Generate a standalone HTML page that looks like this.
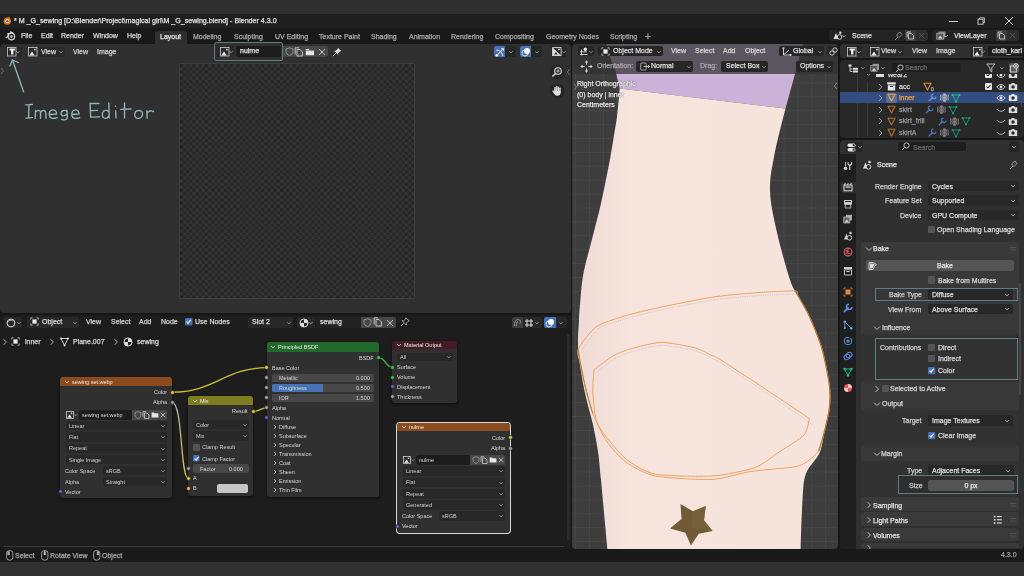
<!DOCTYPE html>
<html><head><meta charset="utf-8">
<style>
*{margin:0;padding:0;box-sizing:border-box}
html,body{width:1024px;height:576px;overflow:hidden;background:#2b2b2b;font-family:"Liberation Sans",sans-serif;color:#d8d8d8;position:relative}
.a{position:absolute}
.t{position:absolute;white-space:nowrap;font-size:7px;line-height:10px;height:10px;-webkit-text-stroke:0.25px currentColor;will-change:transform}
svg.a{overflow:visible}
</style></head><body>
<div class="a" style="left:0px;top:0px;width:1024px;height:14px;background:#303030;border-radius:0px;"></div>
<div class="a" style="left:0px;top:14px;width:1024px;height:14px;background:#1f1f1f;border-radius:0px;"></div>
<div class="a" style="left:0px;top:28px;width:1024px;height:16px;background:#191919;border-radius:0px;"></div>
<div class="a" style="left:0px;top:44px;width:1024px;height:518px;background:#161616;border-radius:0px;"></div>
<div class="a" style="left:0px;top:562px;width:1024px;height:14px;background:#313131;border-radius:0px;"></div>
<svg class="a" style="left:1px;top:16px;" width="11" height="10" viewBox="0 0 11 10"><circle cx="6.3" cy="5.2" r="3.6" fill="#ea7600"/><path d="M0.5 6.5 L4 4.5 L3 3 L6 2.2 L9 0.5 L8.5 3 Z" fill="#ea7600"/><circle cx="6.4" cy="5.2" r="1.9" fill="#fff"/><circle cx="6.4" cy="5.3" r="1.2" fill="#2a5fa8"/></svg>
<div class="t" style="left:14px;top:16.3px;font-size:7.1px;color:#e0e0e0;">* M _G_sewing [D:\Blender\Project\magical girl\M _G_sewing.blend] - Blender 4.3.0</div>
<div class="a" style="left:949px;top:21px;width:9px;height:0.9px;background:#cfcfcf;border-radius:0px;"></div>
<svg class="a" style="left:976px;top:16px;" width="10" height="10" viewBox="0 0 10 10"><rect x="2" y="3.2" width="5" height="5" fill="none" stroke="#cfcfcf" stroke-width="0.9"/><path d="M3.5 3.2 V1.8 H8.4 V6.7 H7" fill="none" stroke="#cfcfcf" stroke-width="0.9"/></svg>
<svg class="a" style="left:1004px;top:16px;" width="10" height="10" viewBox="0 0 10 10"><path d="M1 1 L9 9 M9 1 L1 9" stroke="#dcdcdc" stroke-width="1"/></svg>
<svg class="a" style="left:5px;top:31px;" width="11" height="10" viewBox="0 0 11 10"><circle cx="6.3" cy="5.5" r="3.3" fill="none" stroke="#ddd" stroke-width="1.2"/><circle cx="6.4" cy="5.5" r="1.2" fill="#ddd"/><path d="M0.8 7 L4 4.5 M2 3 L6 2.3 M5 0.8 L8 1.9" stroke="#ddd" stroke-width="1.2"/></svg>
<div class="t" style="left:20.5px;top:30.5px;font-size:7.0px;color:#d8d8d8;">File</div>
<div class="t" style="left:40.6px;top:30.5px;font-size:7.0px;color:#d8d8d8;">Edit</div>
<div class="t" style="left:61px;top:30.5px;font-size:7.0px;color:#d8d8d8;">Render</div>
<div class="t" style="left:92.6px;top:30.5px;font-size:7.0px;color:#d8d8d8;">Window</div>
<div class="t" style="left:126.5px;top:30.5px;font-size:7.0px;color:#d8d8d8;">Help</div>
<div class="a" style="left:155px;top:31px;width:32px;height:13px;background:#2f2f2f;border-radius:3px;border-bottom-left-radius:0;border-bottom-right-radius:0"></div>
<div class="t" style="left:159.8px;top:32.2px;font-size:7.0px;color:#e6e6e6;">Layout</div>
<div class="t" style="left:192.7px;top:32.2px;font-size:7.0px;color:#a8a8a8;">Modeling</div>
<div class="t" style="left:233.7px;top:32.2px;font-size:7.0px;color:#a8a8a8;">Sculpting</div>
<div class="t" style="left:274.5px;top:32.2px;font-size:7.0px;color:#a8a8a8;">UV Editing</div>
<div class="t" style="left:318.5px;top:32.2px;font-size:7.0px;color:#a8a8a8;">Texture Paint</div>
<div class="t" style="left:371px;top:32.2px;font-size:7.0px;color:#a8a8a8;">Shading</div>
<div class="t" style="left:408.8px;top:32.2px;font-size:7.0px;color:#a8a8a8;">Animation</div>
<div class="t" style="left:450.8px;top:32.2px;font-size:7.0px;color:#a8a8a8;">Rendering</div>
<div class="t" style="left:495px;top:32.2px;font-size:7.0px;color:#a8a8a8;">Compositing</div>
<div class="t" style="left:545.5px;top:32.2px;font-size:7.0px;color:#a8a8a8;">Geometry Nodes</div>
<div class="t" style="left:609.5px;top:32.2px;font-size:7.0px;color:#a8a8a8;">Scripting</div>
<div class="t" style="left:645px;top:32.0px;font-size:10px;color:#a0a0a0;">+</div>
<div class="a" style="left:829px;top:30px;width:99px;height:11px;background:#242424;border-radius:3px;"></div>
<svg class="a" style="left:832px;top:31px;" width="14" height="9" viewBox="0 0 14 9"><path d="M1.5 8 L4 2 L6.5 8 Z" fill="#ddd"/><circle cx="7.5" cy="6" r="2.3" fill="none" stroke="#ddd" stroke-width="0.9"/><circle cx="8.3" cy="1.8" r="1.2" fill="#ddd"/></svg>
<svg class="a" style="left:841px;top:32.8px;" width="6" height="6" viewBox="0 0 6 6"><path d="M1.2 2.1 L3 3.9 L4.8 2.1" fill="none" stroke="#bbb" stroke-width="0.9"/></svg>
<div class="t" style="left:851.8px;top:30.5px;font-size:7.0px;color:#dedede;">Scene</div>
<svg class="a" style="left:893px;top:30.5px;" width="10" height="10" viewBox="0 0 10 10"><path d="M2 9 L5 6 M3.5 4 L7 1 L9 3.5 L6 6.5 Z" fill="none" stroke="#999" stroke-width="0.9"/></svg>
<div class="a" style="left:905px;top:30px;width:11px;height:11px;background:#3c3c3c;border-radius:0px;"></div>
<svg class="a" style="left:906px;top:31px;" width="9" height="9" viewBox="0 0 9 9"><path d="M2.5 2.5 H5.5 L7.5 4.5 V8 H2.5 Z M1 6.5 V1 H5" fill="none" stroke="#ccc" stroke-width="0.9"/></svg>
<div class="a" style="left:916px;top:30px;width:12px;height:11px;background:#2e2e2e;border-radius:0px;border-radius:0 3px 3px 0"></div>
<svg class="a" style="left:918px;top:32px;" width="7" height="7" viewBox="0 0 7 7"><path d="M1 1 L6 6 M6 1 L1 6" stroke="#555" stroke-width="0.9"/></svg>
<div class="a" style="left:932px;top:30px;width:87px;height:11px;background:#242424;border-radius:3px;"></div>
<svg class="a" style="left:936px;top:31px;" width="11" height="9" viewBox="0 0 11 9"><rect x="2.5" y="0.5" width="7" height="6" fill="#888"/><rect x="0.8" y="2.2" width="7" height="6" fill="#555" stroke="#bbb" stroke-width="0.7"/><path d="M2 7.5 L4.2 4.5 L6.5 7.5 Z" fill="#ddd"/></svg>
<svg class="a" style="left:943px;top:32.8px;" width="6" height="6" viewBox="0 0 6 6"><path d="M1.2 2.1 L3 3.9 L4.8 2.1" fill="none" stroke="#bbb" stroke-width="0.9"/></svg>
<div class="t" style="left:954px;top:30.5px;font-size:7.0px;color:#dedede;">ViewLayer</div>
<div class="a" style="left:996px;top:30px;width:11px;height:11px;background:#3c3c3c;border-radius:0px;"></div>
<svg class="a" style="left:997px;top:31px;" width="9" height="9" viewBox="0 0 9 9"><path d="M2.5 2.5 H5.5 L7.5 4.5 V8 H2.5 Z M1 6.5 V1 H5" fill="none" stroke="#ccc" stroke-width="0.9"/></svg>
<div class="a" style="left:1007px;top:30px;width:12px;height:11px;background:#2e2e2e;border-radius:0px;border-radius:0 3px 3px 0"></div>
<svg class="a" style="left:1009px;top:32px;" width="7" height="7" viewBox="0 0 7 7"><path d="M1 1 L6 6 M6 1 L1 6" stroke="#555" stroke-width="0.9"/></svg>
<div class="a" style="left:0px;top:44px;width:571px;height:269px;background:#303030;border-radius:4px;"></div>
<div class="a" style="left:5.6px;top:46.5px;width:16px;height:10px;background:#262626;border-radius:2px;"></div>
<svg class="a" style="left:7.0px;top:46.9px;" width="9.5" height="9.5" viewBox="0 0 9.5 9.5"><rect x="0.5" y="0.5" width="8.5" height="8.5" fill="none" stroke="#bdbdbd" stroke-width="0.9"/><path d="M2.5 1.6 H8 V3.6 H6.4 V7.6 H4 V3.6 H2.5 Z" fill="#f0f0f0"/></svg>
<svg class="a" style="left:15.400000000000002px;top:48.9px;" width="6" height="6" viewBox="0 0 6 6"><path d="M1.5 2.25 L3 3.75 L4.5 2.25" fill="none" stroke="#bbb" stroke-width="0.8"/></svg>
<div class="a" style="left:28px;top:46.5px;width:37px;height:10px;background:#2a2a2a;border-radius:2px;"></div>
<svg class="a" style="left:28px;top:46.8px;" width="9.5" height="9.5" viewBox="0 0 9.5 9.5"><rect x="0.5" y="0.5" width="8.5" height="8.5" fill="none" stroke="#bdbdbd" stroke-width="0.9"/><path d="M1.3 8.6 L4 4.6 L6.6 8.6 Z" fill="#f0f0f0"/><circle cx="6.9" cy="2.6" r="0.9" fill="#eee"/></svg>
<div class="t" style="left:41px;top:46.5px;font-size:7.0px;color:#d8d8d8;">View</div>
<svg class="a" style="left:57.5px;top:48.8px;" width="6" height="6" viewBox="0 0 6 6"><path d="M1.5 2.25 L3 3.75 L4.5 2.25" fill="none" stroke="#bbb" stroke-width="0.8"/></svg>
<div class="t" style="left:72.8px;top:46.5px;font-size:7.0px;color:#d2d2d2;">View</div>
<div class="t" style="left:96.9px;top:46.5px;font-size:7.0px;color:#d2d2d2;">Image</div>
<div class="a" style="left:213.5px;top:42px;width:69px;height:19px;background:#303030;border-radius:2px;border:1px solid #5d7c82"></div>
<div class="a" style="left:216px;top:46px;width:18px;height:10.5px;background:#2a2a2a;border-radius:2px;"></div>
<svg class="a" style="left:219.5px;top:47px;" width="9.5" height="9.5" viewBox="0 0 9.5 9.5"><rect x="0.5" y="0.5" width="8.5" height="8.5" fill="none" stroke="#bdbdbd" stroke-width="0.9"/><path d="M1.3 8.6 L4 4.6 L6.6 8.6 Z" fill="#f0f0f0"/><circle cx="6.9" cy="2.6" r="0.9" fill="#eee"/></svg>
<svg class="a" style="left:227.5px;top:48.8px;" width="6" height="6" viewBox="0 0 6 6"><path d="M1.5 2.25 L3 3.75 L4.5 2.25" fill="none" stroke="#bbb" stroke-width="0.8"/></svg>
<div class="a" style="left:235.5px;top:46px;width:45px;height:10.5px;background:#1d1d1d;border-radius:2px;"></div>
<div class="t" style="left:239.8px;top:46.3px;font-size:7.0px;color:#e0e0e0;">nulme</div>
<div class="a" style="left:282.5px;top:46px;width:45px;height:10.5px;background:#474747;border-radius:2px;border-radius:0 2px 2px 0"></div>
<svg class="a" style="left:284.5px;top:47px;" width="9" height="9" viewBox="0 0 9 9"><path d="M4.5 0.8 L8 2 V4.5 C8 6.5 6.5 7.8 4.5 8.5 C2.5 7.8 1 6.5 1 4.5 V2 Z" fill="none" stroke="#999" stroke-width="0.9"/></svg>
<svg class="a" style="left:294px;top:46.8px;" width="10" height="10" viewBox="0 0 10 10"><path d="M3 2.5 H6 L8.5 5 V9 H3 Z M1.2 7.5 V0.8 H5" fill="none" stroke="#cfcfcf" stroke-width="0.9"/></svg>
<svg class="a" style="left:305px;top:47.2px;" width="10" height="9" viewBox="0 0 10 9"><path d="M0.8 2 H3.8 L4.6 3 H9 V8.2 H0.8 Z" fill="#e8e8e8"/><path d="M0.8 3.6 H9" stroke="#474747" stroke-width="0.6"/></svg>
<svg class="a" style="left:318px;top:48.3px;" width="8" height="8" viewBox="0 0 8 8"><path d="M1 1 L7 7 M7 1 L1 7" stroke="#cfcfcf" stroke-width="0.9"/></svg>
<svg class="a" style="left:332px;top:46.5px;" width="10" height="10" viewBox="0 0 10 10"><path d="M6 0.8 L9.2 4 L7.8 4.6 L6.2 6.3 L6.3 8 L2 3.7 L3.7 3.8 L5.4 2.2 Z" fill="#ddd"/><path d="M3.6 6.4 L0.8 9.2" stroke="#ddd" stroke-width="1"/></svg>
<div class="a" style="left:494px;top:46px;width:11px;height:11px;background:#4772b3;border-radius:2px;border-radius:2px 0 0 2px"></div>
<svg class="a" style="left:494.5px;top:46.5px;" width="10" height="10" viewBox="0 0 10 10"><path d="M1.3 3.2 C4.5 3 7.5 5.5 7.8 9.2" fill="none" stroke="#fff" stroke-width="0.9"/><path d="M1.8 8.3 L8.2 1.9" stroke="#fff" stroke-width="0.9"/><circle cx="1.9" cy="8.2" r="1.3" fill="#fff"/><path d="M5.8 1.3 L8.7 1.3 L8.7 4.2 Z" fill="#fff"/></svg>
<div class="a" style="left:505px;top:46px;width:11px;height:11px;background:#262626;border-radius:2px;border-radius:0 2px 2px 0"></div>
<svg class="a" style="left:507.5px;top:48.8px;" width="6" height="6" viewBox="0 0 6 6"><path d="M1.4 2.2 L3 3.8 L4.6 2.2" fill="none" stroke="#bbb" stroke-width="0.8"/></svg>
<div class="a" style="left:520px;top:46px;width:11px;height:11px;background:#4772b3;border-radius:2px;border-radius:2px 0 0 2px"></div>
<svg class="a" style="left:520.5px;top:46.5px;" width="10" height="10" viewBox="0 0 10 10"><circle cx="4" cy="6" r="3" fill="none" stroke="#dfe8f5" stroke-width="0.9"/><circle cx="6" cy="4" r="3" fill="#fff"/></svg>
<div class="a" style="left:531px;top:46px;width:11px;height:11px;background:#262626;border-radius:2px;border-radius:0 2px 2px 0"></div>
<svg class="a" style="left:533.5px;top:48.8px;" width="6" height="6" viewBox="0 0 6 6"><path d="M1.4 2.2 L3 3.8 L4.6 2.2" fill="none" stroke="#bbb" stroke-width="0.8"/></svg>
<div class="a" style="left:551px;top:46px;width:15px;height:11px;background:#262626;border-radius:2px;"></div>
<svg class="a" style="left:551.5px;top:47px;" width="10" height="9" viewBox="0 0 10 9"><rect x="0.6" y="0.6" width="8.5" height="8" fill="none" stroke="#ddd" stroke-width="0.9"/><path d="M0.6 0.6 L9 8.6 H0.6 Z" fill="#ddd"/><path d="M2 7.5 L4 5 L5.5 7.5Z" fill="#333"/><circle cx="7" cy="2.4" r="0.8" fill="#ddd"/></svg>
<svg class="a" style="left:560.5px;top:48.8px;" width="6" height="6" viewBox="0 0 6 6"><path d="M1.5 2.25 L3 3.75 L4.5 2.25" fill="none" stroke="#bbb" stroke-width="0.8"/></svg>
<svg class="a" style="left:549px;top:64px;" width="16" height="16" viewBox="0 0 16 16"><circle cx="8" cy="8" r="7.4" fill="#262626"/><circle cx="9" cy="7" r="3.3" fill="none" stroke="#e0e0e0" stroke-width="1.1"/><path d="M9 5.3 V8.7 M7.3 7 H10.7" stroke="#e0e0e0" stroke-width="0.8"/><path d="M6.6 9.4 L3.4 12.6" stroke="#e0e0e0" stroke-width="1.4"/></svg>
<svg class="a" style="left:549px;top:82.5px;" width="16" height="16" viewBox="0 0 16 16"><circle cx="8" cy="8" r="7.4" fill="#262626"/><g fill="#e0e0e0"><rect x="5.2" y="4" width="1.5" height="5" rx="0.75"/><rect x="6.9" y="3" width="1.5" height="6" rx="0.75"/><rect x="8.6" y="3.4" width="1.5" height="5.6" rx="0.75"/><rect x="10.3" y="4.6" width="1.4" height="4.6" rx="0.7"/><path d="M5.2 8 H11.7 V9.5 C11.7 11.5 10.3 12.8 8.5 12.8 C7 12.8 6.2 12.2 5.3 11 L3.3 8.3 C3 7.7 3.8 7.2 4.3 7.6 L5.2 8.5 Z"/></g></svg>
<svg class="a" style="left:566px;top:67.5px;" width="5" height="8" viewBox="0 0 5 8"><path d="M3.8 1 L1.3 4 L3.8 7" fill="none" stroke="#777" stroke-width="0.9"/></svg>
<svg class="a" style="left:0px;top:67px;" width="5" height="8" viewBox="0 0 5 8"><path d="M1 1 L3.5 4 L1 7" fill="none" stroke="#777" stroke-width="0.9"/></svg>
<div class="a" style="left:178.5px;top:63px;width:236px;height:236px;background:#3d3d3d;border-radius:1.5px;"></div>
<svg class="a" style="left:179.5px;top:64px;" width="234" height="234" viewBox="0 0 234 234"><defs><pattern id="chk" patternUnits="userSpaceOnUse" x="0" y="0" width="6.25" height="6.25"><rect width="6.25" height="6.25" fill="#333333"/><rect width="3.125" height="3.125" fill="#262626"/><rect x="3.125" y="3.125" width="3.125" height="3.125" fill="#262626"/></pattern></defs><rect width="234" height="234" fill="url(#chk)"/></svg>
<svg class="a" style="left:0px;top:55px;" width="170" height="75" viewBox="0 0 170 75"><g fill="none" stroke="#92b4bb" stroke-width="1.35" stroke-linecap="round" stroke-linejoin="round">
<path d="M23.6 36.9 L12.5 5"/><path d="M10 10.8 L12.5 5 L18.3 7.5"/>
<path d="M25.7 49.8 L32.4 49.5 M29 49.7 L28.6 62.8 M26 63.2 L32.4 62.6"/>
<path d="M35.5 55.5 L35.2 63.5 M35.4 57.5 C37 54.8 39.8 54.8 40.5 57 L40.5 63.3 M40.6 57.3 C42.2 54.8 45.4 55 45.8 57.5 L46 63.3"/>
<path d="M49.5 59.5 L56.5 59 C56.8 56 54.5 54.7 52.7 54.9 C50.2 55.3 49 57.8 49.4 60.6 C49.8 63.2 52.5 64.3 57.2 62.6"/>
<path d="M67 56.5 C65.5 54.8 61.3 55 61 58.2 C60.8 61 63.7 61.8 66.8 59.3 M67 55.2 L67.4 61.5 C67.6 64.8 64.5 65.5 61.5 64.4"/>
<path d="M72 59.5 L79 59 C79.3 56 77 54.7 75.2 54.9 C72.7 55.3 71.5 57.8 71.9 60.6 C72.3 63.2 75 64.3 79.7 62.6"/>
<path d="M90.2 48.5 L90.6 62.2 M90.3 48.5 L99 48.5 M90.5 55.6 L97.5 55.3 M90.6 62.2 L99.6 61.8"/>
<path d="M108.8 48 L109.2 63 M108.8 57 C107.5 54.6 103.2 54.8 102.4 58.3 C101.7 61.5 103.5 63.6 106 63.3 C107.5 63 108.5 62 109 60.5"/>
<path d="M115.5 51.2 L115.6 51.4 M115.7 55.8 L116 62.8"/>
<path d="M124.5 48 L124.5 63 M120.8 54.4 L131 54"/>
<path d="M138.5 55.5 C135.5 55.5 134.6 58 134.7 60 C134.8 62.5 136.6 63.5 138.6 63.4 C141 63.2 142.4 61.2 142.5 59 C142.6 56.7 141 55.4 138.5 55.5Z"/>
<path d="M146.8 55.8 L147.2 63.2 M147 58.2 C148.3 55.8 151.5 55.2 153.5 56.6"/>
</g></svg>
<div class="a" style="left:0px;top:314.5px;width:571px;height:234px;background:#1d1d1d;border-radius:4px;"></div>
<div class="a" style="left:4px;top:316.5px;width:18px;height:11px;background:#282828;border-radius:2px;"></div>
<svg class="a" style="left:6px;top:317.5px;" width="10" height="10" viewBox="0 0 10 10"><circle cx="5" cy="5" r="3.9" fill="none" stroke="#ddd" stroke-width="1"/><path d="M2.5 3.5 C3.5 2 5.5 1.8 6.5 2.6" fill="none" stroke="#ddd" stroke-width="1"/></svg>
<svg class="a" style="left:15.5px;top:319.5px;" width="6" height="6" viewBox="0 0 6 6"><path d="M1.5 2.25 L3 3.75 L4.5 2.25" fill="none" stroke="#bbb" stroke-width="0.8"/></svg>
<div class="a" style="left:27px;top:316.5px;width:52px;height:11px;background:#282828;border-radius:2px;"></div>
<svg class="a" style="left:30px;top:317.3px;" width="9" height="9" viewBox="0 0 9 9"><path d="M0.8 2.5 V0.8 H2.5 M6.5 0.8 H8.2 V2.5 M8.2 6.5 V8.2 H6.5 M2.5 8.2 H0.8 V6.5" fill="none" stroke="#ccc" stroke-width="0.8"/><rect x="2.4" y="2.4" width="4.2" height="4.2" fill="#eee"/></svg>
<div class="t" style="left:41.5px;top:317.0px;font-size:7.0px;color:#d8d8d8;">Object</div>
<svg class="a" style="left:72px;top:319.5px;" width="6" height="6" viewBox="0 0 6 6"><path d="M1.5 2.25 L3 3.75 L4.5 2.25" fill="none" stroke="#bbb" stroke-width="0.8"/></svg>
<div class="t" style="left:86.4px;top:317.0px;font-size:7.0px;color:#d2d2d2;">View</div>
<div class="t" style="left:110.5px;top:317.0px;font-size:7.0px;color:#d2d2d2;">Select</div>
<div class="t" style="left:138.8px;top:317.0px;font-size:7.0px;color:#d2d2d2;">Add</div>
<div class="t" style="left:160.6px;top:317.0px;font-size:7.0px;color:#d2d2d2;">Node</div>
<svg class="a" style="left:185px;top:318.25px;" width="7.5" height="7.5" viewBox="0 0 7.5 7.5"><rect x="0" y="0" width="7.5" height="7.5" rx="1.3" fill="#4772b3"/><path d="M1.6 3.6 L3 5.1 L5.6 1.9" fill="none" stroke="#fff" stroke-width="1.1"/></svg>
<div class="t" style="left:195px;top:317.0px;font-size:7.0px;color:#d8d8d8;">Use Nodes</div>
<div class="a" style="left:248px;top:316.5px;width:44.5px;height:11px;background:#282828;border-radius:2px;"></div>
<div class="t" style="left:252px;top:317.0px;font-size:7.0px;color:#d8d8d8;">Slot 2</div>
<svg class="a" style="left:285.5px;top:319.5px;" width="6" height="6" viewBox="0 0 6 6"><path d="M1.5 2.25 L3 3.75 L4.5 2.25" fill="none" stroke="#bbb" stroke-width="0.8"/></svg>
<div class="a" style="left:297px;top:316.5px;width:18px;height:11px;background:#282828;border-radius:2px;border-radius:2px 0 0 2px"></div>
<svg class="a" style="left:299px;top:317.5px;" width="10" height="10" viewBox="0 0 10 10"><circle cx="5" cy="5" r="4" fill="none" stroke="#ddd" stroke-width="1"/><path d="M5 1 A4 4 0 0 1 9 5 L5 5 Z M5 5 L1 5 A4 4 0 0 0 5 9 Z" fill="#ddd"/></svg>
<svg class="a" style="left:308px;top:319.5px;" width="6" height="6" viewBox="0 0 6 6"><path d="M1.5 2.25 L3 3.75 L4.5 2.25" fill="none" stroke="#bbb" stroke-width="0.8"/></svg>
<div class="a" style="left:315.5px;top:316.5px;width:46px;height:11px;background:#1d1d1d;border-radius:0px;"></div>
<div class="a" style="left:315.5px;top:316.5px;width:46px;height:11px;background:#232323;border-radius:0px;"></div>
<div class="t" style="left:319.5px;top:317.0px;font-size:7.0px;color:#dedede;">sewing</div>
<div class="a" style="left:361px;top:316.5px;width:35px;height:11px;background:#474747;border-radius:2px;border-radius:0 2px 2px 0"></div>
<svg class="a" style="left:363px;top:317.5px;" width="9" height="9" viewBox="0 0 9 9"><path d="M4.5 0.8 L8 2 V4.5 C8 6.5 6.5 7.8 4.5 8.5 C2.5 7.8 1 6.5 1 4.5 V2 Z" fill="none" stroke="#999" stroke-width="0.9"/></svg>
<svg class="a" style="left:373px;top:317.3px;" width="10" height="10" viewBox="0 0 10 10"><path d="M3 2.5 H6 L8.5 5 V9 H3 Z M1.2 7.5 V0.8 H5" fill="none" stroke="#cfcfcf" stroke-width="0.9"/></svg>
<svg class="a" style="left:386px;top:318.5px;" width="8" height="8" viewBox="0 0 8 8"><path d="M1 1 L7 7 M7 1 L1 7" stroke="#cfcfcf" stroke-width="0.9"/></svg>
<svg class="a" style="left:400px;top:317px;" width="10" height="10" viewBox="0 0 10 10"><path d="M6 0.8 L9.2 4 L7.8 4.6 L6.2 6.3 L6.3 8 L2 3.7 L3.7 3.8 L5.4 2.2 Z" fill="none" stroke="#bbb" stroke-width="0.8"/><path d="M3.6 6.4 L0.8 9.2" stroke="#bbb" stroke-width="0.9"/></svg>
<div class="a" style="left:511.5px;top:316.5px;width:11px;height:11px;background:#3d3d3d;border-radius:2px;border-radius:2px 0 0 2px"></div>
<svg class="a" style="left:512.5px;top:317.5px;" width="9" height="9" viewBox="0 0 9 9"><path d="M1.5 8 C1 4 3 1.5 5 1.5 C7.5 1.5 8 4 7 5.5 M3.5 8 C3 5.5 4 3.5 5 3.5" fill="none" stroke="#999" stroke-width="0.9"/></svg>
<div class="a" style="left:522.5px;top:316.5px;width:19px;height:11px;background:#282828;border-radius:2px;border-radius:0 2px 2px 0"></div>
<svg class="a" style="left:524px;top:317.5px;" width="10" height="10" viewBox="0 0 10 10"><path d="M1 3 H9 M1 7 H9 M3 1 V9 M7 1 V9" stroke="#ddd" stroke-width="1"/></svg>
<svg class="a" style="left:534px;top:319.5px;" width="6" height="6" viewBox="0 0 6 6"><path d="M1.5 2.25 L3 3.75 L4.5 2.25" fill="none" stroke="#bbb" stroke-width="0.8"/></svg>
<div class="a" style="left:544px;top:316.5px;width:11.5px;height:11px;background:#4772b3;border-radius:2px;border-radius:2px 0 0 2px"></div>
<svg class="a" style="left:545px;top:317.5px;" width="10" height="10" viewBox="0 0 10 10"><circle cx="4" cy="6" r="3" fill="none" stroke="#dfe8f5" stroke-width="0.9"/><circle cx="6" cy="4" r="3" fill="#fff"/></svg>
<div class="a" style="left:555.5px;top:316.5px;width:11px;height:11px;background:#282828;border-radius:2px;border-radius:0 2px 2px 0"></div>
<svg class="a" style="left:558px;top:319.5px;" width="6" height="6" viewBox="0 0 6 6"><path d="M1.5 2.25 L3 3.75 L4.5 2.25" fill="none" stroke="#bbb" stroke-width="0.8"/></svg>
<svg class="a" style="left:1.5px;top:338.7px;" width="6" height="6" viewBox="0 0 6 6"><path d="M1.6 0.20000000000000018 L4.4 3 L1.6 5.8" fill="none" stroke="#bbb" stroke-width="0.9"/></svg>
<svg class="a" style="left:11px;top:337.2px;" width="9" height="9" viewBox="0 0 9 9"><path d="M0.8 2.5 V0.8 H2.5 M6.5 0.8 H8.2 V2.5 M8.2 6.5 V8.2 H6.5 M2.5 8.2 H0.8 V6.5" fill="none" stroke="#ccc" stroke-width="0.8"/><rect x="2.4" y="2.4" width="4.2" height="4.2" fill="#eee"/></svg>
<div class="t" style="left:25px;top:336.5px;font-size:7.0px;color:#d8d8d8;">inner</div>
<svg class="a" style="left:49.4px;top:338.7px;" width="6" height="6" viewBox="0 0 6 6"><path d="M1.6 0.20000000000000018 L4.4 3 L1.6 5.8" fill="none" stroke="#bbb" stroke-width="0.9"/></svg>
<svg class="a" style="left:59.5px;top:337px;" width="9" height="10" viewBox="0 0 9 10"><path d="M1 1.5 L8 1.5 L4.5 8.5 Z" fill="none" stroke="#ddd" stroke-width="0.9"/><circle cx="1" cy="1.5" r="1" fill="#ddd"/><circle cx="8" cy="1.5" r="1" fill="#ddd"/><circle cx="4.5" cy="8.5" r="1" fill="#ddd"/></svg>
<div class="t" style="left:73px;top:336.5px;font-size:7.0px;color:#d8d8d8;">Plane.007</div>
<svg class="a" style="left:113px;top:338.7px;" width="6" height="6" viewBox="0 0 6 6"><path d="M1.6 0.20000000000000018 L4.4 3 L1.6 5.8" fill="none" stroke="#bbb" stroke-width="0.9"/></svg>
<svg class="a" style="left:122.5px;top:336.8px;" width="10" height="10" viewBox="0 0 10 10"><circle cx="5" cy="5" r="4" fill="none" stroke="#ddd" stroke-width="1"/><path d="M5 1 A4 4 0 0 1 9 5 L5 5 Z M5 5 L1 5 A4 4 0 0 0 5 9 Z" fill="#ddd"/></svg>
<div class="t" style="left:137.4px;top:336.5px;font-size:7.0px;color:#d8d8d8;">sewing</div>
<svg class="a" style="left:566px;top:343px;" width="5" height="8" viewBox="0 0 5 8"><path d="M3.8 1 L1.3 4 L3.8 7" fill="none" stroke="#666" stroke-width="0.9"/></svg>
<div class="a" style="left:567px;top:334px;width:2.5px;height:206px;background:#2a2a2a;border-radius:1px;"></div>
<div class="a" style="left:4px;top:545.8px;width:560px;height:1.6px;background:#3a3a3a;border-radius:1px;"></div>
<svg class="a" style="left:0px;top:0px;" width="571" height="548" viewBox="0 0 571 548">
<path d="M172 392.2 C215 392.2 225 367.7 267 367.7" fill="none" stroke="#c9c23a" stroke-width="1.3"/>
<defs><linearGradient id="lg1" x1="0" y1="0" x2="0" y2="1"><stop offset="0" stop-color="#bfbfbf"/><stop offset="1" stop-color="#d4cb3a"/></linearGradient></defs>
<path d="M172 402.3 C183 402.3 180 478.4 188.4 478.4" fill="none" stroke="url(#lg1)" stroke-width="1.2"/>
<path d="M253 411.4 C260 411.4 260 407.8 267 407.8" fill="none" stroke="#c9c23a" stroke-width="1.3"/>
<path d="M378.8 357.8 C386 357.8 385 367 392 367" fill="none" stroke="#3fb34f" stroke-width="1.3"/>
</svg>
<div class="a" style="left:60.3px;top:377px;width:111.7px;height:121.2px;background:#303030;border-radius:3px;box-shadow:0 1px 3px rgba(0,0,0,0.5)"></div>
<div class="a" style="left:60.3px;top:377px;width:111.7px;height:9px;background:#8b4c1d;border-radius:3px 3px 0 0"></div>
<svg class="a" style="left:63.8px;top:378.8px;" width="6" height="6" viewBox="0 0 6 6"><path d="M1.2 2.1 L3 3.9 L4.8 2.1" fill="none" stroke="#e0e0e0" stroke-width="0.9"/></svg>
<div class="t" style="left:71.8px;top:376.5px;font-size:5.5px;color:#ececec;-webkit-text-stroke:0px;">sewing set.webp</div>
<div class="t" style="right:857px;top:387.2px;font-size:5.5px;color:#d6d6d6;text-align:right;-webkit-text-stroke:0px;">Color</div>
<svg class="a" style="left:169.5px;top:389.7px;" width="5" height="5" viewBox="0 0 5 5"><circle cx="2.5" cy="2.5" r="1.9" fill="#d7c93f" stroke="#111" stroke-width="0.5"/></svg>
<div class="t" style="right:857px;top:397.3px;font-size:5.5px;color:#d6d6d6;text-align:right;-webkit-text-stroke:0px;">Alpha</div>
<svg class="a" style="left:169.5px;top:399.8px;" width="5" height="5" viewBox="0 0 5 5"><circle cx="2.5" cy="2.5" r="1.9" fill="#a1a1a1" stroke="#111" stroke-width="0.5"/></svg>
<svg class="a" style="left:65.5px;top:410.5px;" width="8" height="8" viewBox="0 0 8 8"><rect x="0.4" y="0.4" width="7" height="7" fill="none" stroke="#ccc" stroke-width="0.8"/><path d="M1.3 6.8 L3.6 3.6 L5.9 6.8 Z" fill="#eee"/><circle cx="5.6" cy="2.2" r="0.8" fill="#eee"/></svg>
<svg class="a" style="left:73.0px;top:411.8px;" width="6" height="6" viewBox="0 0 6 6"><path d="M1.7 2.35 L3 3.65 L4.3 2.35" fill="none" stroke="#bbb" stroke-width="0.7"/></svg>
<div class="a" style="left:79.0px;top:409.5px;width:53.0px;height:10px;background:#1d1d1d;border-radius:2px;"></div>
<div class="t" style="left:82.0px;top:409.5px;font-size:5.5px;color:#d8d8d8;-webkit-text-stroke:0px;">sewing set.webp</div>
<div class="a" style="left:132.0px;top:409.5px;width:35px;height:10px;background:#474747;border-radius:2px;border-radius:0 2px 2px 0"></div>
<svg class="a" style="left:133.5px;top:410.5px;" width="8" height="8" viewBox="0 0 8 8"><path d="M4 0.7 L7 1.8 V4 C7 5.8 5.7 6.9 4 7.5 C2.3 6.9 1 5.8 1 4 V1.8 Z" fill="none" stroke="#999" stroke-width="0.8"/></svg>
<svg class="a" style="left:142.0px;top:410.5px;" width="8" height="8" viewBox="0 0 8 8"><path d="M2.5 2 H5 L7 4 V7.5 H2.5 Z M1 6 V0.7 H4" fill="none" stroke="#ccc" stroke-width="0.8"/></svg>
<svg class="a" style="left:150.5px;top:410.8px;" width="8" height="7" viewBox="0 0 8 7"><path d="M0.6 1.5 H3 L3.7 2.3 H7.4 V6.6 H0.6 Z" fill="#e5e5e5"/></svg>
<svg class="a" style="left:159.5px;top:411.5px;" width="6" height="6" viewBox="0 0 6 6"><path d="M0.8 0.8 L5.2 5.2 M5.2 0.8 L0.8 5.2" stroke="#ccc" stroke-width="0.8"/></svg>
<div class="a" style="left:65.5px;top:421.2px;width:101.5px;height:9.2px;background:#282828;border-radius:2px;"></div>
<div class="t" style="left:68.5px;top:420.8px;font-size:5.5px;color:#cfcfcf;-webkit-text-stroke:0px;">Linear</div>
<svg class="a" style="left:160.0px;top:423.1px;" width="6" height="6" viewBox="0 0 6 6"><path d="M1.5 2.25 L3 3.75 L4.5 2.25" fill="none" stroke="#bbb" stroke-width="0.8"/></svg>
<div class="a" style="left:65.5px;top:432.4px;width:101.5px;height:9.2px;background:#282828;border-radius:2px;"></div>
<div class="t" style="left:68.5px;top:432.0px;font-size:5.5px;color:#cfcfcf;-webkit-text-stroke:0px;">Flat</div>
<svg class="a" style="left:160.0px;top:434.3px;" width="6" height="6" viewBox="0 0 6 6"><path d="M1.5 2.25 L3 3.75 L4.5 2.25" fill="none" stroke="#bbb" stroke-width="0.8"/></svg>
<div class="a" style="left:65.5px;top:443.59999999999997px;width:101.5px;height:9.2px;background:#282828;border-radius:2px;"></div>
<div class="t" style="left:68.5px;top:443.2px;font-size:5.5px;color:#cfcfcf;-webkit-text-stroke:0px;">Repeat</div>
<svg class="a" style="left:160.0px;top:445.5px;" width="6" height="6" viewBox="0 0 6 6"><path d="M1.5 2.25 L3 3.75 L4.5 2.25" fill="none" stroke="#bbb" stroke-width="0.8"/></svg>
<div class="a" style="left:65.5px;top:454.9px;width:101.5px;height:9.2px;background:#282828;border-radius:2px;"></div>
<div class="t" style="left:68.5px;top:454.5px;font-size:5.5px;color:#cfcfcf;-webkit-text-stroke:0px;">Single Image</div>
<svg class="a" style="left:160.0px;top:456.8px;" width="6" height="6" viewBox="0 0 6 6"><path d="M1.5 2.25 L3 3.75 L4.5 2.25" fill="none" stroke="#bbb" stroke-width="0.8"/></svg>
<div class="t" style="left:65px;top:465.5px;font-size:5.5px;color:#cfcfcf;-webkit-text-stroke:0px;">Color Space</div>
<div class="a" style="left:102.5px;top:465.9px;width:64.5px;height:9.2px;background:#282828;border-radius:2px;"></div>
<div class="t" style="left:105.5px;top:465.5px;font-size:5.5px;color:#cfcfcf;-webkit-text-stroke:0px;">sRGB</div>
<svg class="a" style="left:160.0px;top:467.8px;" width="6" height="6" viewBox="0 0 6 6"><path d="M1.5 2.25 L3 3.75 L4.5 2.25" fill="none" stroke="#bbb" stroke-width="0.8"/></svg>
<div class="t" style="left:65px;top:476.8px;font-size:5.5px;color:#cfcfcf;-webkit-text-stroke:0px;">Alpha</div>
<div class="a" style="left:102.5px;top:477.2px;width:64.5px;height:9.2px;background:#282828;border-radius:2px;"></div>
<div class="t" style="left:105.5px;top:476.8px;font-size:5.5px;color:#cfcfcf;-webkit-text-stroke:0px;">Straight</div>
<svg class="a" style="left:160.0px;top:479.1px;" width="6" height="6" viewBox="0 0 6 6"><path d="M1.5 2.25 L3 3.75 L4.5 2.25" fill="none" stroke="#bbb" stroke-width="0.8"/></svg>
<div class="t" style="left:65px;top:486.7px;font-size:5.5px;color:#d6d6d6;-webkit-text-stroke:0px;">Vector</div>
<svg class="a" style="left:57.8px;top:489.2px;" width="5" height="5" viewBox="0 0 5 5"><circle cx="2.5" cy="2.5" r="1.9" fill="#6363c7" stroke="#111" stroke-width="0.5"/></svg>
<div class="a" style="left:188.4px;top:396.4px;width:64.6px;height:99.6px;background:#303030;border-radius:3px;box-shadow:0 1px 3px rgba(0,0,0,0.5)"></div>
<div class="a" style="left:188.4px;top:396.4px;width:64.6px;height:8.6px;background:#7e7d20;border-radius:3px 3px 0 0"></div>
<svg class="a" style="left:191.9px;top:398.0px;" width="6" height="6" viewBox="0 0 6 6"><path d="M1.2 2.1 L3 3.9 L4.8 2.1" fill="none" stroke="#e0e0e0" stroke-width="0.9"/></svg>
<div class="t" style="left:199.9px;top:395.7px;font-size:5.5px;color:#ececec;-webkit-text-stroke:0px;">Mix</div>
<div class="t" style="right:776px;top:406.4px;font-size:5.5px;color:#d6d6d6;text-align:right;-webkit-text-stroke:0px;">Result</div>
<svg class="a" style="left:250.5px;top:408.9px;" width="5" height="5" viewBox="0 0 5 5"><circle cx="2.5" cy="2.5" r="1.9" fill="#d7c93f" stroke="#111" stroke-width="0.5"/></svg>
<div class="a" style="left:193px;top:420.2px;width:55.5px;height:9.2px;background:#282828;border-radius:2px;"></div>
<div class="t" style="left:196px;top:419.8px;font-size:5.5px;color:#cfcfcf;-webkit-text-stroke:0px;">Color</div>
<svg class="a" style="left:241.5px;top:422.1px;" width="6" height="6" viewBox="0 0 6 6"><path d="M1.5 2.25 L3 3.75 L4.5 2.25" fill="none" stroke="#bbb" stroke-width="0.8"/></svg>
<div class="a" style="left:193px;top:431.4px;width:55.5px;height:9.2px;background:#282828;border-radius:2px;"></div>
<div class="t" style="left:196px;top:431.0px;font-size:5.5px;color:#cfcfcf;-webkit-text-stroke:0px;">Mix</div>
<svg class="a" style="left:241.5px;top:433.3px;" width="6" height="6" viewBox="0 0 6 6"><path d="M1.5 2.25 L3 3.75 L4.5 2.25" fill="none" stroke="#bbb" stroke-width="0.8"/></svg>
<div class="a" style="left:193px;top:444.05px;width:6.5px;height:6.5px;background:#545454;border-radius:1.3px;"></div>
<div class="t" style="left:201.5px;top:442.3px;font-size:5.5px;color:#cfcfcf;-webkit-text-stroke:0px;">Clamp Result</div>
<svg class="a" style="left:193px;top:455.25px;" width="6.5" height="6.5" viewBox="0 0 6.5 6.5"><rect x="0" y="0" width="6.5" height="6.5" rx="1.3" fill="#4772b3"/><path d="M1.6 3.6 L3 5.1 L5.6 1.9" fill="none" stroke="#fff" stroke-width="1.1"/></svg>
<div class="t" style="left:201.5px;top:453.5px;font-size:5.5px;color:#cfcfcf;-webkit-text-stroke:0px;">Clamp Factor</div>
<div class="a" style="left:193px;top:464px;width:55.5px;height:9.2px;background:#484848;border-radius:2px;"></div>
<div class="t" style="left:200px;top:463.5px;font-size:5.5px;color:#cfcfcf;-webkit-text-stroke:0px;">Factor</div>
<div class="t" style="right:781px;top:463.5px;font-size:5.5px;color:#d6d6d6;text-align:right;-webkit-text-stroke:0px;">0.000</div>
<svg class="a" style="left:185.9px;top:466.0px;" width="5" height="5" viewBox="0 0 5 5"><circle cx="2.5" cy="2.5" r="1.9" fill="#a1a1a1" stroke="#111" stroke-width="0.5"/></svg>
<div class="t" style="left:193px;top:473.4px;font-size:5.5px;color:#d6d6d6;-webkit-text-stroke:0px;">A</div>
<svg class="a" style="left:185.9px;top:475.9px;" width="5" height="5" viewBox="0 0 5 5"><circle cx="2.5" cy="2.5" r="1.9" fill="#d7c93f" stroke="#111" stroke-width="0.5"/></svg>
<div class="t" style="left:193px;top:483.3px;font-size:5.5px;color:#d6d6d6;-webkit-text-stroke:0px;">B</div>
<svg class="a" style="left:185.9px;top:485.8px;" width="5" height="5" viewBox="0 0 5 5"><circle cx="2.5" cy="2.5" r="1.9" fill="#d7c93f" stroke="#111" stroke-width="0.5"/></svg>
<div class="a" style="left:217.3px;top:484px;width:30.6px;height:8.6px;background:#c6c6c6;border-radius:2px;"></div>
<div class="a" style="left:266.8px;top:342.4px;width:112px;height:154.6px;background:#303030;border-radius:3px;box-shadow:0 1px 3px rgba(0,0,0,0.5)"></div>
<div class="a" style="left:266.8px;top:342.4px;width:112px;height:9.3px;background:#22692b;border-radius:3px 3px 0 0"></div>
<svg class="a" style="left:270.3px;top:344.34999999999997px;" width="6" height="6" viewBox="0 0 6 6"><path d="M1.2 2.1 L3 3.9 L4.8 2.1" fill="none" stroke="#e0e0e0" stroke-width="0.9"/></svg>
<div class="t" style="left:278.3px;top:342.04999999999995px;font-size:5.5px;color:#ececec;-webkit-text-stroke:0px;">Principled BSDF</div>
<div class="t" style="right:650.2px;top:352.8px;font-size:5.5px;color:#d6d6d6;text-align:right;-webkit-text-stroke:0px;">BSDF</div>
<svg class="a" style="left:376.3px;top:355.3px;" width="5" height="5" viewBox="0 0 5 5"><circle cx="2.5" cy="2.5" r="1.9" fill="#3fc14f" stroke="#111" stroke-width="0.5"/></svg>
<div class="t" style="left:271.7px;top:362.7px;font-size:5.5px;color:#d6d6d6;-webkit-text-stroke:0px;">Base Color</div>
<svg class="a" style="left:264.3px;top:365.2px;" width="5" height="5" viewBox="0 0 5 5"><circle cx="2.5" cy="2.5" r="1.9" fill="#d7c93f" stroke="#111" stroke-width="0.5"/></svg>
<div class="a" style="left:271.7px;top:373.59999999999997px;width:102.5px;height:8.6px;background:#484848;border-radius:2px;"></div>
<div class="t" style="left:278.5px;top:372.9px;font-size:5.5px;color:#d6d6d6;-webkit-text-stroke:0px;">Metallic</div>
<div class="t" style="right:654px;top:372.9px;font-size:5.5px;color:#d6d6d6;text-align:right;-webkit-text-stroke:0px;">0.000</div>
<svg class="a" style="left:264.3px;top:375.4px;" width="5" height="5" viewBox="0 0 5 5"><circle cx="2.5" cy="2.5" r="1.9" fill="#a1a1a1" stroke="#111" stroke-width="0.5"/></svg>
<div class="a" style="left:271.7px;top:383.5px;width:102.5px;height:8.6px;background:#484848;border-radius:2px;"></div>
<div class="a" style="left:271.7px;top:383.5px;width:51px;height:8.6px;background:#4772b3;border-radius:2px;border-radius:2px 0 0 2px"></div>
<div class="t" style="left:278.5px;top:382.8px;font-size:5.5px;color:#d6d6d6;-webkit-text-stroke:0px;">Roughness</div>
<div class="t" style="right:654px;top:382.8px;font-size:5.5px;color:#d6d6d6;text-align:right;-webkit-text-stroke:0px;">0.500</div>
<svg class="a" style="left:264.3px;top:385.3px;" width="5" height="5" viewBox="0 0 5 5"><circle cx="2.5" cy="2.5" r="1.9" fill="#a1a1a1" stroke="#111" stroke-width="0.5"/></svg>
<div class="a" style="left:271.7px;top:393.59999999999997px;width:102.5px;height:8.6px;background:#484848;border-radius:2px;"></div>
<div class="t" style="left:278.5px;top:392.9px;font-size:5.5px;color:#d6d6d6;-webkit-text-stroke:0px;">IOR</div>
<div class="t" style="right:654px;top:392.9px;font-size:5.5px;color:#d6d6d6;text-align:right;-webkit-text-stroke:0px;">1.500</div>
<svg class="a" style="left:264.3px;top:395.4px;" width="5" height="5" viewBox="0 0 5 5"><circle cx="2.5" cy="2.5" r="1.9" fill="#a1a1a1" stroke="#111" stroke-width="0.5"/></svg>
<div class="t" style="left:271.7px;top:402.8px;font-size:5.5px;color:#d6d6d6;-webkit-text-stroke:0px;">Alpha</div>
<svg class="a" style="left:264.3px;top:405.3px;" width="5" height="5" viewBox="0 0 5 5"><circle cx="2.5" cy="2.5" r="1.9" fill="#a1a1a1" stroke="#111" stroke-width="0.5"/></svg>
<div class="t" style="left:271.7px;top:412.7px;font-size:5.5px;color:#d6d6d6;-webkit-text-stroke:0px;">Normal</div>
<svg class="a" style="left:264.3px;top:415.2px;" width="5" height="5" viewBox="0 0 5 5"><circle cx="2.5" cy="2.5" r="1.9" fill="#6363c7" stroke="#111" stroke-width="0.5"/></svg>
<svg class="a" style="left:271.5px;top:423.7px;" width="6" height="6" viewBox="0 0 6 6"><path d="M2.05 1.1 L3.95 3 L2.05 4.9" fill="none" stroke="#c8c8c8" stroke-width="0.9"/></svg>
<div class="t" style="left:278.5px;top:421.7px;font-size:5.5px;color:#d6d6d6;-webkit-text-stroke:0px;">Diffuse</div>
<svg class="a" style="left:271.5px;top:433px;" width="6" height="6" viewBox="0 0 6 6"><path d="M2.05 1.1 L3.95 3 L2.05 4.9" fill="none" stroke="#c8c8c8" stroke-width="0.9"/></svg>
<div class="t" style="left:278.5px;top:431.0px;font-size:5.5px;color:#d6d6d6;-webkit-text-stroke:0px;">Subsurface</div>
<svg class="a" style="left:271.5px;top:442px;" width="6" height="6" viewBox="0 0 6 6"><path d="M2.05 1.1 L3.95 3 L2.05 4.9" fill="none" stroke="#c8c8c8" stroke-width="0.9"/></svg>
<div class="t" style="left:278.5px;top:440.0px;font-size:5.5px;color:#d6d6d6;-webkit-text-stroke:0px;">Specular</div>
<svg class="a" style="left:271.5px;top:451px;" width="6" height="6" viewBox="0 0 6 6"><path d="M2.05 1.1 L3.95 3 L2.05 4.9" fill="none" stroke="#c8c8c8" stroke-width="0.9"/></svg>
<div class="t" style="left:278.5px;top:449.0px;font-size:5.5px;color:#d6d6d6;-webkit-text-stroke:0px;">Transmission</div>
<svg class="a" style="left:271.5px;top:460px;" width="6" height="6" viewBox="0 0 6 6"><path d="M2.05 1.1 L3.95 3 L2.05 4.9" fill="none" stroke="#c8c8c8" stroke-width="0.9"/></svg>
<div class="t" style="left:278.5px;top:458.0px;font-size:5.5px;color:#d6d6d6;-webkit-text-stroke:0px;">Coat</div>
<svg class="a" style="left:271.5px;top:469px;" width="6" height="6" viewBox="0 0 6 6"><path d="M2.05 1.1 L3.95 3 L2.05 4.9" fill="none" stroke="#c8c8c8" stroke-width="0.9"/></svg>
<div class="t" style="left:278.5px;top:467.0px;font-size:5.5px;color:#d6d6d6;-webkit-text-stroke:0px;">Sheen</div>
<svg class="a" style="left:271.5px;top:478px;" width="6" height="6" viewBox="0 0 6 6"><path d="M2.05 1.1 L3.95 3 L2.05 4.9" fill="none" stroke="#c8c8c8" stroke-width="0.9"/></svg>
<div class="t" style="left:278.5px;top:476.0px;font-size:5.5px;color:#d6d6d6;-webkit-text-stroke:0px;">Emission</div>
<svg class="a" style="left:271.5px;top:487px;" width="6" height="6" viewBox="0 0 6 6"><path d="M2.05 1.1 L3.95 3 L2.05 4.9" fill="none" stroke="#c8c8c8" stroke-width="0.9"/></svg>
<div class="t" style="left:278.5px;top:485.0px;font-size:5.5px;color:#d6d6d6;-webkit-text-stroke:0px;">Thin Film</div>
<div class="a" style="left:392px;top:340.9px;width:65px;height:62.1px;background:#303030;border-radius:3px;box-shadow:0 1px 3px rgba(0,0,0,0.5)"></div>
<div class="a" style="left:392px;top:340.9px;width:65px;height:8.1px;background:#431c26;border-radius:3px 3px 0 0"></div>
<svg class="a" style="left:395.5px;top:342.25px;" width="6" height="6" viewBox="0 0 6 6"><path d="M1.2 2.1 L3 3.9 L4.8 2.1" fill="none" stroke="#e0e0e0" stroke-width="0.9"/></svg>
<div class="t" style="left:403.5px;top:339.95px;font-size:5.5px;color:#ececec;-webkit-text-stroke:0px;">Material Output</div>
<div class="a" style="left:397px;top:352.6px;width:56px;height:8.8px;background:#282828;border-radius:2px;"></div>
<div class="t" style="left:400px;top:352.0px;font-size:5.5px;color:#cfcfcf;-webkit-text-stroke:0px;">All</div>
<svg class="a" style="left:446px;top:354.3px;" width="6" height="6" viewBox="0 0 6 6"><path d="M1.5 2.25 L3 3.75 L4.5 2.25" fill="none" stroke="#bbb" stroke-width="0.8"/></svg>
<div class="t" style="left:397px;top:362.0px;font-size:5.5px;color:#d6d6d6;-webkit-text-stroke:0px;">Surface</div>
<svg class="a" style="left:389.5px;top:364.5px;" width="5" height="5" viewBox="0 0 5 5"><circle cx="2.5" cy="2.5" r="1.9" fill="#3fc14f" stroke="#111" stroke-width="0.5"/></svg>
<div class="t" style="left:397px;top:372.0px;font-size:5.5px;color:#d6d6d6;-webkit-text-stroke:0px;">Volume</div>
<svg class="a" style="left:389.5px;top:374.5px;" width="5" height="5" viewBox="0 0 5 5"><circle cx="2.5" cy="2.5" r="1.9" fill="#3fc14f" stroke="#111" stroke-width="0.5"/></svg>
<div class="t" style="left:397px;top:381.9px;font-size:5.5px;color:#d6d6d6;-webkit-text-stroke:0px;">Displacement</div>
<svg class="a" style="left:389.5px;top:384.4px;" width="5" height="5" viewBox="0 0 5 5"><circle cx="2.5" cy="2.5" r="1.9" fill="#6363c7" stroke="#111" stroke-width="0.5"/></svg>
<div class="t" style="left:397px;top:391.7px;font-size:5.5px;color:#d6d6d6;-webkit-text-stroke:0px;">Thickness</div>
<svg class="a" style="left:389.5px;top:394.2px;" width="5" height="5" viewBox="0 0 5 5"><circle cx="2.5" cy="2.5" r="1.9" fill="#a1a1a1" stroke="#111" stroke-width="0.5"/></svg>
<div class="a" style="left:397.3px;top:422.7px;width:112.7px;height:110.5px;background:#303030;border-radius:3px;box-shadow:0 0 0 1px #d8d8d8"></div>
<div class="a" style="left:397.3px;top:422.7px;width:112.7px;height:8.6px;background:#8b4c1d;border-radius:3px 3px 0 0"></div>
<svg class="a" style="left:400.8px;top:424.3px;" width="6" height="6" viewBox="0 0 6 6"><path d="M1.2 2.1 L3 3.9 L4.8 2.1" fill="none" stroke="#e0e0e0" stroke-width="0.9"/></svg>
<div class="t" style="left:408.8px;top:422.0px;font-size:5.5px;color:#ececec;-webkit-text-stroke:0px;">nulme</div>
<div class="t" style="right:519px;top:432.8px;font-size:5.5px;color:#d6d6d6;text-align:right;-webkit-text-stroke:0px;">Color</div>
<svg class="a" style="left:507.5px;top:435.3px;" width="5" height="5" viewBox="0 0 5 5"><circle cx="2.5" cy="2.5" r="1.9" fill="#d7c93f" stroke="#111" stroke-width="0.5"/></svg>
<div class="t" style="right:519px;top:443.0px;font-size:5.5px;color:#d6d6d6;text-align:right;-webkit-text-stroke:0px;">Alpha</div>
<svg class="a" style="left:507.5px;top:445.5px;" width="5" height="5" viewBox="0 0 5 5"><circle cx="2.5" cy="2.5" r="1.9" fill="#a1a1a1" stroke="#111" stroke-width="0.5"/></svg>
<svg class="a" style="left:402.5px;top:456px;" width="8" height="8" viewBox="0 0 8 8"><rect x="0.4" y="0.4" width="7" height="7" fill="none" stroke="#ccc" stroke-width="0.8"/><path d="M1.3 6.8 L3.6 3.6 L5.9 6.8 Z" fill="#eee"/><circle cx="5.6" cy="2.2" r="0.8" fill="#eee"/></svg>
<svg class="a" style="left:410.0px;top:457.3px;" width="6" height="6" viewBox="0 0 6 6"><path d="M1.7 2.35 L3 3.65 L4.3 2.35" fill="none" stroke="#bbb" stroke-width="0.7"/></svg>
<div class="a" style="left:416.0px;top:455px;width:54.0px;height:10px;background:#1d1d1d;border-radius:2px;"></div>
<div class="t" style="left:419.0px;top:455.0px;font-size:5.5px;color:#d8d8d8;-webkit-text-stroke:0px;">nulme</div>
<div class="a" style="left:470.0px;top:455px;width:35px;height:10px;background:#474747;border-radius:2px;border-radius:0 2px 2px 0"></div>
<svg class="a" style="left:471.5px;top:456px;" width="8" height="8" viewBox="0 0 8 8"><path d="M4 0.7 L7 1.8 V4 C7 5.8 5.7 6.9 4 7.5 C2.3 6.9 1 5.8 1 4 V1.8 Z" fill="none" stroke="#999" stroke-width="0.8"/></svg>
<svg class="a" style="left:480.0px;top:456px;" width="8" height="8" viewBox="0 0 8 8"><path d="M2.5 2 H5 L7 4 V7.5 H2.5 Z M1 6 V0.7 H4" fill="none" stroke="#ccc" stroke-width="0.8"/></svg>
<svg class="a" style="left:488.5px;top:456.3px;" width="8" height="7" viewBox="0 0 8 7"><path d="M0.6 1.5 H3 L3.7 2.3 H7.4 V6.6 H0.6 Z" fill="#e5e5e5"/></svg>
<svg class="a" style="left:497.5px;top:457px;" width="6" height="6" viewBox="0 0 6 6"><path d="M0.8 0.8 L5.2 5.2 M5.2 0.8 L0.8 5.2" stroke="#ccc" stroke-width="0.8"/></svg>
<div class="a" style="left:402.5px;top:466.4px;width:102.5px;height:9.2px;background:#282828;border-radius:2px;"></div>
<div class="t" style="left:405.5px;top:466.0px;font-size:5.5px;color:#cfcfcf;-webkit-text-stroke:0px;">Linear</div>
<svg class="a" style="left:498.0px;top:468.3px;" width="6" height="6" viewBox="0 0 6 6"><path d="M1.5 2.25 L3 3.75 L4.5 2.25" fill="none" stroke="#bbb" stroke-width="0.8"/></svg>
<div class="a" style="left:402.5px;top:477.7px;width:102.5px;height:9.2px;background:#282828;border-radius:2px;"></div>
<div class="t" style="left:405.5px;top:477.3px;font-size:5.5px;color:#cfcfcf;-webkit-text-stroke:0px;">Flat</div>
<svg class="a" style="left:498.0px;top:479.6px;" width="6" height="6" viewBox="0 0 6 6"><path d="M1.5 2.25 L3 3.75 L4.5 2.25" fill="none" stroke="#bbb" stroke-width="0.8"/></svg>
<div class="a" style="left:402.5px;top:489.4px;width:102.5px;height:9.2px;background:#282828;border-radius:2px;"></div>
<div class="t" style="left:405.5px;top:489.0px;font-size:5.5px;color:#cfcfcf;-webkit-text-stroke:0px;">Repeat</div>
<svg class="a" style="left:498.0px;top:491.3px;" width="6" height="6" viewBox="0 0 6 6"><path d="M1.5 2.25 L3 3.75 L4.5 2.25" fill="none" stroke="#bbb" stroke-width="0.8"/></svg>
<div class="a" style="left:402.5px;top:500.4px;width:102.5px;height:9.2px;background:#282828;border-radius:2px;"></div>
<div class="t" style="left:405.5px;top:500.0px;font-size:5.5px;color:#cfcfcf;-webkit-text-stroke:0px;">Generated</div>
<svg class="a" style="left:498.0px;top:502.3px;" width="6" height="6" viewBox="0 0 6 6"><path d="M1.5 2.25 L3 3.75 L4.5 2.25" fill="none" stroke="#bbb" stroke-width="0.8"/></svg>
<div class="t" style="left:402px;top:511.0px;font-size:5.5px;color:#cfcfcf;-webkit-text-stroke:0px;">Color Space</div>
<div class="a" style="left:439px;top:511.4px;width:66px;height:9.2px;background:#282828;border-radius:2px;"></div>
<div class="t" style="left:442px;top:511.0px;font-size:5.5px;color:#cfcfcf;-webkit-text-stroke:0px;">sRGB</div>
<svg class="a" style="left:498px;top:513.3px;" width="6" height="6" viewBox="0 0 6 6"><path d="M1.5 2.25 L3 3.75 L4.5 2.25" fill="none" stroke="#bbb" stroke-width="0.8"/></svg>
<div class="t" style="left:402px;top:521.0px;font-size:5.5px;color:#d6d6d6;-webkit-text-stroke:0px;">Vector</div>
<svg class="a" style="left:394.8px;top:523.5px;" width="5" height="5" viewBox="0 0 5 5"><circle cx="2.5" cy="2.5" r="1.9" fill="#6363c7" stroke="#111" stroke-width="0.5"/></svg>
<div class="a" style="left:572px;top:44px;width:266px;height:505px;border-radius:4px;overflow:hidden;background:#3d3d3d"><svg width="266" height="505" viewBox="572 44 266 505" style="position:absolute;left:0;top:0"><g stroke="#474747" stroke-width="1" fill="none"><path d="M784.0 44 V549"/><path d="M770.1 44 V549"/><path d="M756.2 44 V549"/><path d="M742.3 44 V549"/><path d="M728.4 44 V549"/><path d="M714.5 44 V549"/><path d="M700.6 44 V549"/><path d="M686.7 44 V549"/><path d="M672.8 44 V549"/><path d="M658.9 44 V549"/><path d="M645.0 44 V549"/><path d="M631.1 44 V549"/><path d="M617.2 44 V549"/><path d="M603.3 44 V549"/><path d="M589.4 44 V549"/><path d="M575.5 44 V549"/><path d="M797.9 44 V549"/><path d="M811.8 44 V549"/><path d="M825.7 44 V549"/><path d="M572 152.4 H838"/><path d="M572 138.5 H838"/><path d="M572 124.6 H838"/><path d="M572 110.7 H838"/><path d="M572 96.8 H838"/><path d="M572 82.9 H838"/><path d="M572 69.0 H838"/><path d="M572 55.1 H838"/><path d="M572 166.3 H838"/><path d="M572 180.2 H838"/><path d="M572 194.1 H838"/><path d="M572 208.0 H838"/><path d="M572 221.9 H838"/><path d="M572 235.8 H838"/><path d="M572 249.7 H838"/><path d="M572 263.6 H838"/><path d="M572 277.5 H838"/><path d="M572 291.4 H838"/><path d="M572 305.3 H838"/><path d="M572 319.2 H838"/><path d="M572 333.1 H838"/><path d="M572 347.0 H838"/><path d="M572 360.9 H838"/><path d="M572 374.8 H838"/><path d="M572 388.7 H838"/><path d="M572 402.6 H838"/><path d="M572 416.5 H838"/><path d="M572 430.4 H838"/><path d="M572 444.3 H838"/><path d="M572 458.2 H838"/><path d="M572 472.1 H838"/><path d="M572 486.0 H838"/><path d="M572 499.9 H838"/><path d="M572 513.8 H838"/><path d="M572 527.7 H838"/><path d="M572 541.6 H838"/></g><path d="M604.8 40 L804 40 L795 74 L785.5 108.5 L619.7 88.5 L615.8 72 L610.3 58 Z" fill="#cab2d8"/><defs><linearGradient id="pg" gradientUnits="userSpaceOnUse" x1="578" y1="0" x2="830" y2="0"><stop offset="0" stop-color="#f0dad5"/><stop offset="0.2" stop-color="#f6e4dd"/><stop offset="1" stop-color="#f5e3dc"/></linearGradient></defs><path d="M619.7 88.5 L785.5 108.5  C783.6 116.2 777.0 141.3 774.4 155.0 C771.8 168.7 769.6 178.2 770.0 190.8 C770.4 203.4 773.3 216.0 776.6 230.8 C779.9 245.6 786.5 269.1 790.0 279.8 C793.5 290.6 794.5 289.2 797.7 295.3 C800.9 301.4 805.3 307.5 809.4 316.5 C813.5 325.5 818.8 337.8 822.1 349.3 C825.4 360.8 828.2 376.0 829.4 385.7 C830.6 395.4 830.3 399.7 829.4 407.6 C828.5 415.5 825.6 425.5 824.0 433.1 C822.4 440.7 822.5 446.2 819.5 453.0 C816.5 459.8 808.8 465.8 806.0 473.6 C803.2 481.4 803.4 486.9 802.5 500.0 C801.6 513.1 800.8 543.3 800.5 552.0 L607.6 552  C606.5 539.8 602.5 495.5 600.9 478.8 C599.3 462.1 599.4 460.8 598.0 451.7 C596.6 442.6 595.1 434.4 592.8 424.0 C590.5 413.6 586.6 401.7 584.2 389.2 C581.8 376.7 579.1 360.8 578.2 349.2 C577.4 337.6 578.7 327.2 579.0 319.7 C579.3 312.2 579.4 311.6 580.1 304.0 C580.8 296.4 581.3 285.2 583.3 274.2 C585.3 263.2 589.3 250.0 592.3 238.0 C595.3 226.0 598.3 215.5 601.3 202.0 C604.3 188.5 608.2 168.2 610.4 156.9 C612.5 145.6 613.1 141.1 614.2 134.0 C615.4 126.9 616.4 121.9 617.3 114.3 C618.2 106.7 619.3 92.8 619.7 88.5 Z" fill="url(#pg)"/><path d="M578.2 349.2 C580.1 344.7 591.0 330.5 596.3 326.7 C601.6 322.9 616.7 318.5 624.0 316.2 C631.3 314.0 648.5 309.8 658.8 307.6 C669.1 305.4 700.8 298.9 712.0 297.2 C723.2 295.5 745.0 293.5 754.7 292.8 C764.4 292.1 789.8 290.7 794.8 291.0 C799.8 291.3 796.0 292.3 797.7 295.3 C799.4 298.3 806.6 310.2 809.4 316.5 C812.2 322.8 819.8 341.2 822.1 349.3 C824.4 357.4 828.5 378.9 829.4 385.7 C830.3 392.5 830.0 402.1 829.4 407.6 C828.8 413.1 825.3 428.0 824.0 433.1 C822.7 438.2 821.5 447.5 818.5 451.3 C815.5 455.1 806.3 463.7 798.4 466.0 C790.5 468.3 761.1 469.8 751.0 471.4 C740.9 473.0 723.2 478.9 712.0 479.4 C700.8 479.9 665.4 478.0 655.3 476.0 C645.2 474.0 631.5 466.1 625.8 462.0 C620.1 457.9 610.6 446.9 606.7 441.2 C602.9 435.6 595.2 419.6 592.8 413.5 C590.4 407.4 587.3 394.9 585.9 389.2 C584.5 383.5 581.6 369.6 580.7 364.9 C579.8 360.2 576.4 353.7 578.2 349.2Z" fill="none" stroke="#f0a35e" stroke-width="1"/><path d="M794.8 291.0 C795.1 291.5 796.0 292.3 797.7 295.3 C799.4 298.3 806.6 310.2 809.4 316.5 C812.2 322.8 819.8 341.2 822.1 349.3 C824.4 357.4 828.5 378.9 829.4 385.7 C830.3 392.5 830.0 402.1 829.4 407.6 C828.8 413.1 825.3 428.0 824.0 433.1 C822.7 438.2 819.1 449.2 818.5 451.3" fill="none" stroke="#b07a35" stroke-width="1.1"/><path d="M578.2 349.2 C578.5 351.0 579.8 360.2 580.7 364.9 C581.6 369.6 584.5 383.5 585.9 389.2 C587.3 394.9 592.0 410.7 592.8 413.5" fill="none" stroke="#b07a35" stroke-width="1"/><path d="M594.0 369.8 C596.3 368.1 609.0 358.1 613.7 355.5 C618.4 352.9 628.9 349.2 634.5 347.7 C640.1 346.2 654.8 342.4 661.8 342.4 C668.8 342.4 688.5 346.2 694.4 347.7 C700.3 349.2 709.2 354.3 712.0 355.5 C714.8 356.7 713.2 355.3 718.2 358.4 C723.2 361.5 744.1 375.0 754.7 382.0 C765.3 389.0 803.0 414.2 809.4 418.5  C808.8 420.4 807.4 431.2 804.0 435.0 C800.6 438.8 786.0 447.5 780.2 451.3 C774.4 455.1 762.7 464.8 754.7 467.7 C746.7 470.6 723.6 475.2 712.0 476.0 C700.4 476.8 665.1 476.0 655.3 474.2 C645.5 472.4 633.3 464.5 627.6 460.3 C621.9 456.1 610.4 442.5 606.7 437.8 C603.0 433.1 597.9 425.7 596.3 420.4 C594.7 415.1 593.1 398.5 592.8 392.6 C592.5 386.7 593.9 372.5 594.0 369.8Z" fill="none" stroke="#f0a35e" stroke-width="1"/><path d="M583.0 349.0 C584.8 346.7 593.1 332.5 598.0 329.0 C602.9 325.5 617.9 321.2 625.0 319.0 C632.1 316.8 648.9 312.7 659.0 310.5 C669.1 308.3 700.8 301.9 712.0 300.2 C723.2 298.5 745.1 296.5 754.7 295.8 C764.3 295.1 789.4 294.2 794.0 294.0" fill="none" stroke="#bdb5b5" stroke-width="0.8" stroke-dasharray="0.9 0.9" opacity="0.9"/><path d="M596.6 372.0 C598.7 370.4 610.5 361.0 615.0 358.5 C619.5 356.0 629.5 352.2 635.0 350.7 C640.5 349.2 655.1 345.4 662.0 345.4 C668.9 345.4 687.9 348.8 694.4 350.7 C700.9 352.6 711.0 357.4 718.0 361.4 C725.0 365.4 744.4 378.2 754.7 385.0 C765.0 391.8 799.3 415.3 806.0 420.0 C812.7 424.7 811.3 424.4 812.0 425.0" fill="none" stroke="#bdb5b5" stroke-width="0.8" stroke-dasharray="0.9 0.9" opacity="0.9"/><path d="M680.5 504.1 L693 511.2 L705.8 506 L704 520.3 L712.5 531.1 L698.7 533.7 L691 545.6 L685.3 532.7 L670 528.6 L681.5 518.9 Z" fill="#715b36"/><path d="M693 511.2 L691 528 L712.5 531.1 L704 520.3 L705.8 506 Z" fill="#7a6440" opacity="0.6"/></svg></div>
<div class="a" style="left:572px;top:44px;width:266px;height:30px;background:rgba(48,48,48,0.72);border-radius:4px;border-radius:4px 4px 0 0"></div>
<div class="a" style="left:577.5px;top:46.2px;width:16.5px;height:10px;background:#262626;border-radius:2px;"></div>
<svg class="a" style="left:579px;top:47px;" width="10" height="9" viewBox="0 0 10 9"><path d="M1 7.5 H8.5 M2.5 2.5 V8.5 M1 4.8 L8 4.8" stroke="#ddd" stroke-width="0.9"/><circle cx="6.3" cy="2.3" r="1.7" fill="#eee"/></svg>
<svg class="a" style="left:588px;top:48.7px;" width="6" height="6" viewBox="0 0 6 6"><path d="M1.5 2.25 L3 3.75 L4.5 2.25" fill="none" stroke="#bbb" stroke-width="0.8"/></svg>
<div class="a" style="left:598px;top:46.2px;width:65px;height:10px;background:#262626;border-radius:2px;"></div>
<svg class="a" style="left:601px;top:47px;" width="9" height="9" viewBox="0 0 9 9"><path d="M0.8 2.5 V0.8 H2.5 M6.5 0.8 H8.2 V2.5 M8.2 6.5 V8.2 H6.5 M2.5 8.2 H0.8 V6.5" fill="none" stroke="#ccc" stroke-width="0.8"/><rect x="2.4" y="2.4" width="4.2" height="4.2" fill="#eee"/></svg>
<div class="t" style="left:613px;top:46.2px;font-size:7.0px;color:#dedede;">Object Mode</div>
<svg class="a" style="left:655.5px;top:48.7px;" width="6" height="6" viewBox="0 0 6 6"><path d="M1.5 2.25 L3 3.75 L4.5 2.25" fill="none" stroke="#bbb" stroke-width="0.8"/></svg>
<div class="t" style="left:670.5px;top:46.2px;font-size:7.0px;color:#d6d6d6;">View</div>
<div class="t" style="left:694.5px;top:46.2px;font-size:7.0px;color:#d6d6d6;">Select</div>
<div class="t" style="left:723px;top:46.2px;font-size:7.0px;color:#d6d6d6;">Add</div>
<div class="t" style="left:744.5px;top:46.2px;font-size:7.0px;color:#d6d6d6;">Object</div>
<div class="a" style="left:779px;top:46.2px;width:45px;height:10px;background:#262626;border-radius:2px;"></div>
<svg class="a" style="left:781.5px;top:46.8px;" width="10" height="9" viewBox="0 0 10 9"><path d="M1.5 1 V8 H9" fill="none" stroke="#ddd" stroke-width="0.9"/><path d="M1.5 8 L7 3" stroke="#ddd" stroke-width="0.9"/><circle cx="1.5" cy="1.2" r="1" fill="#ddd"/><circle cx="8.6" cy="8" r="1" fill="#ddd"/></svg>
<div class="t" style="left:793px;top:46.2px;font-size:7.0px;color:#dedede;">Global</div>
<svg class="a" style="left:816.5px;top:48.7px;" width="6" height="6" viewBox="0 0 6 6"><path d="M1.5 2.25 L3 3.75 L4.5 2.25" fill="none" stroke="#bbb" stroke-width="0.8"/></svg>
<div class="a" style="left:827px;top:46.2px;width:11px;height:10px;background:#262626;border-radius:2px;"></div>
<svg class="a" style="left:828.5px;top:47px;" width="9" height="9" viewBox="0 0 9 9"><circle cx="3" cy="6" r="2.2" fill="none" stroke="#ddd" stroke-width="0.9"/><circle cx="6" cy="3" r="2.2" fill="none" stroke="#ddd" stroke-width="0.9"/></svg>
<svg class="a" style="left:579.5px;top:60px;" width="13" height="13" viewBox="0 0 13 13"><g stroke="#ddd" stroke-width="0.9"><path d="M6.5 1.5 V4.8 M6.5 8.2 V11.5 M1.5 6.5 H4.8 M8.2 6.5 H11.5"/></g><g fill="#ddd"><path d="M6.5 0.3 L8.2 2.5 H4.8 Z"/><path d="M6.5 12.7 L8.2 10.5 H4.8 Z"/><path d="M0.3 6.5 L2.5 4.8 V8.2 Z"/><path d="M12.7 6.5 L10.5 4.8 V8.2 Z"/></g></svg>
<div class="t" style="left:596.7px;top:61.3px;font-size:7.0px;color:#a8a8a8;">Orientation:</div>
<div class="a" style="left:636.3px;top:60.5px;width:57px;height:11px;background:#262626;border-radius:2px;"></div>
<svg class="a" style="left:639.5px;top:61.5px;" width="11" height="9" viewBox="0 0 11 9"><rect x="0.7" y="1" width="5.5" height="7" rx="1" fill="none" stroke="#bbb" stroke-width="0.8"/><path d="M3.5 4.5 H9.5 M8 3 L9.5 4.5 L8 6" fill="none" stroke="#ddd" stroke-width="0.8"/></svg>
<div class="t" style="left:651.4px;top:61.2px;font-size:7.0px;color:#dedede;">Normal</div>
<svg class="a" style="left:686px;top:63.7px;" width="6" height="6" viewBox="0 0 6 6"><path d="M1.5 2.25 L3 3.75 L4.5 2.25" fill="none" stroke="#bbb" stroke-width="0.8"/></svg>
<div class="t" style="left:700px;top:61.3px;font-size:7.0px;color:#a8a8a8;">Drag:</div>
<div class="a" style="left:721px;top:60.5px;width:47.4px;height:11px;background:#262626;border-radius:2px;"></div>
<div class="t" style="left:725.5px;top:61.2px;font-size:7.0px;color:#dedede;">Select Box</div>
<svg class="a" style="left:761px;top:63.7px;" width="6" height="6" viewBox="0 0 6 6"><path d="M1.5 2.25 L3 3.75 L4.5 2.25" fill="none" stroke="#bbb" stroke-width="0.8"/></svg>
<div class="a" style="left:795.8px;top:60.5px;width:37.6px;height:11px;background:#262626;border-radius:2px;"></div>
<div class="t" style="left:799.7px;top:61.2px;font-size:7.0px;color:#dedede;">Options</div>
<svg class="a" style="left:826px;top:63.7px;" width="6" height="6" viewBox="0 0 6 6"><path d="M1.5 2.25 L3 3.75 L4.5 2.25" fill="none" stroke="#bbb" stroke-width="0.8"/></svg>
<div class="t" style="left:577px;top:79.2px;font-size:7.0px;color:#e8e8e8;text-shadow:0 0 1.5px #000">Right Orthographic</div>
<div class="t" style="left:577px;top:89.5px;font-size:7.0px;color:#e8e8e8;text-shadow:0 0 1.5px #000">(0) body | inner</div>
<div class="t" style="left:577px;top:100.0px;font-size:7.0px;color:#e8e8e8;text-shadow:0 0 1.5px #000">Centimeters</div>
<svg class="a" style="left:573px;top:82.5px;" width="5" height="8" viewBox="0 0 5 8"><path d="M1 1 L3.5 4 L1 7" fill="none" stroke="#888" stroke-width="0.9"/></svg>
<svg class="a" style="left:833px;top:82px;" width="5" height="8" viewBox="0 0 5 8"><path d="M3.8 1 L1.3 4 L3.8 7" fill="none" stroke="#888" stroke-width="0.9"/></svg>
<div class="a" style="left:839.5px;top:44px;width:184.5px;height:14.3px;background:#303030;border-radius:4px;"></div>
<div class="a" style="left:846px;top:46.3px;width:16px;height:10px;background:#262626;border-radius:2px;"></div>
<svg class="a" style="left:847.4px;top:46.699999999999996px;" width="9.5" height="9.5" viewBox="0 0 9.5 9.5"><rect x="0.5" y="0.5" width="8.5" height="8.5" fill="none" stroke="#bdbdbd" stroke-width="0.9"/><path d="M2.5 1.6 H8 V3.6 H6.4 V7.6 H4 V3.6 H2.5 Z" fill="#f0f0f0"/></svg>
<svg class="a" style="left:855.8px;top:48.699999999999996px;" width="6" height="6" viewBox="0 0 6 6"><path d="M1.5 2.25 L3 3.75 L4.5 2.25" fill="none" stroke="#bbb" stroke-width="0.8"/></svg>
<div class="a" style="left:867px;top:46.3px;width:37px;height:10px;background:#2a2a2a;border-radius:2px;"></div>
<svg class="a" style="left:870px;top:46.8px;" width="9.5" height="9.5" viewBox="0 0 9.5 9.5"><rect x="0.5" y="0.5" width="8.5" height="8.5" fill="none" stroke="#bdbdbd" stroke-width="0.9"/><path d="M1.3 8.6 L4 4.6 L6.6 8.6 Z" fill="#f0f0f0"/><circle cx="6.9" cy="2.6" r="0.9" fill="#eee"/></svg>
<div class="t" style="left:880.5px;top:46.3px;font-size:7.0px;color:#d8d8d8;">View</div>
<svg class="a" style="left:896.5px;top:48.6px;" width="6" height="6" viewBox="0 0 6 6"><path d="M1.5 2.25 L3 3.75 L4.5 2.25" fill="none" stroke="#bbb" stroke-width="0.8"/></svg>
<div class="t" style="left:911.8px;top:46.3px;font-size:7.0px;color:#d2d2d2;">View</div>
<div class="t" style="left:935.6px;top:46.3px;font-size:7.0px;color:#d2d2d2;">Image</div>
<div class="a" style="left:970.3px;top:46.3px;width:17px;height:10px;background:#2a2a2a;border-radius:2px;border-radius:2px 0 0 2px"></div>
<svg class="a" style="left:972.5px;top:46.8px;" width="9.5" height="9.5" viewBox="0 0 9.5 9.5"><rect x="0.5" y="0.5" width="8.5" height="8.5" fill="none" stroke="#bdbdbd" stroke-width="0.9"/><path d="M1.3 8.6 L4 4.6 L6.6 8.6 Z" fill="#f0f0f0"/><circle cx="6.9" cy="2.6" r="0.9" fill="#eee"/></svg>
<svg class="a" style="left:980px;top:48.6px;" width="6" height="6" viewBox="0 0 6 6"><path d="M1.5 2.25 L3 3.75 L4.5 2.25" fill="none" stroke="#bbb" stroke-width="0.8"/></svg>
<div class="a" style="left:987.7px;top:46.3px;width:36.3px;height:10px;background:#1d1d1d;border-radius:0px;"></div>
<div class="t" style="left:991.5px;top:46.3px;font-size:7.0px;color:#e0e0e0;">cloth_karl</div>
<div class="a" style="left:839.5px;top:60.3px;width:184.5px;height:77.7px;background:#282828;border-radius:4px;"></div>
<div class="a" style="left:846px;top:62.8px;width:20px;height:10px;background:#262626;border-radius:2px;"></div>
<svg class="a" style="left:848px;top:63.5px;" width="11" height="9" viewBox="0 0 11 9"><rect x="0.5" y="0.5" width="3" height="2.2" fill="#ddd"/><path d="M2 2.7 V7.5 H4.5 M2 5 H4.5" fill="none" stroke="#ddd" stroke-width="0.8"/><rect x="5" y="3.8" width="5" height="2" fill="#ddd"/><rect x="5" y="6.5" width="5" height="2" fill="#ddd"/></svg>
<svg class="a" style="left:859.5px;top:64.8px;" width="6" height="6" viewBox="0 0 6 6"><path d="M1.5 2.25 L3 3.75 L4.5 2.25" fill="none" stroke="#bbb" stroke-width="0.8"/></svg>
<div class="a" style="left:868px;top:62.8px;width:19px;height:10px;background:#262626;border-radius:2px;"></div>
<svg class="a" style="left:870px;top:63px;" width="10" height="9" viewBox="0 0 10 9"><rect x="2.5" y="0.8" width="6.5" height="6" fill="#999"/><rect x="0.7" y="2.5" width="6.5" height="6" fill="#555" stroke="#aaa" stroke-width="0.6"/><path d="M1.8 7.8 L4 5 L6.3 7.8 Z" fill="#ddd"/></svg>
<svg class="a" style="left:879.5px;top:64.8px;" width="6" height="6" viewBox="0 0 6 6"><path d="M1.5 2.25 L3 3.75 L4.5 2.25" fill="none" stroke="#bbb" stroke-width="0.8"/></svg>
<div class="a" style="left:892px;top:63px;width:68.5px;height:9.3px;background:#1e1e1e;border-radius:2.5px;"></div>
<svg class="a" style="left:895px;top:63.7px;" width="9" height="9" viewBox="0 0 9 9"><circle cx="5.5" cy="3.5" r="2.6" fill="none" stroke="#ccc" stroke-width="0.9"/><path d="M3.6 5.4 L0.8 8.2" stroke="#ccc" stroke-width="1"/></svg>
<div class="t" style="left:905px;top:62.599999999999994px;font-size:7.0px;color:#6a6a6a;">Search</div>
<svg class="a" style="left:986px;top:63px;" width="11" height="10" viewBox="0 0 11 10"><path d="M0.8 1 H9 L5.8 4.8 V8.8 L4 7.6 V4.8 Z" fill="none" stroke="#ddd" stroke-width="0.8"/></svg>
<svg class="a" style="left:998.5px;top:65.2px;" width="6" height="6" viewBox="0 0 6 6"><path d="M1.5 2.25 L3 3.75 L4.5 2.25" fill="none" stroke="#bbb" stroke-width="0.8"/></svg>
<div class="a" style="left:1008.5px;top:62.8px;width:10.5px;height:10.5px;background:#5a5a5a;border-radius:2px;"></div>
<svg class="a" style="left:1009px;top:63.3px;" width="10" height="10" viewBox="0 0 10 10"><rect x="1.5" y="3" width="6" height="6" fill="none" stroke="#ddd" stroke-width="0.8"/><circle cx="7" cy="3" r="2.3" fill="#5a5a5a" stroke="#eee" stroke-width="0.8"/><path d="M7 1.7 V4.3 M5.7 3 H8.3" stroke="#eee" stroke-width="0.7"/></svg>
<div class="a" style="left:839.5px;top:74px;width:184.5px;height:63.8px;overflow:hidden;border-radius:0 0 4px 4px">
<div style="position:absolute;left:17.0px;top:0px;width:0.8px;height:64px;background:#3a3a3a;border-radius:0px"></div>
<div style="position:absolute;left:27.700000000000045px;top:8px;width:0.8px;height:54px;background:#3a3a3a;border-radius:0px"></div>
<div style="position:absolute;left:0.0px;top:17.900000000000006px;width:184.5px;height:11.5px;background:#334d80;border-radius:0px"></div>
<svg style="position:absolute;left:26.5px;top:-1px;overflow:visible" width="5" height="4"><path d="M1 1 L2.5 2.5 L4 1" fill="none" stroke="#aaa" stroke-width="0.8"/></svg>
<div style="position:absolute;left:36.0px;top:-0.5px;width:8px;height:3.5px;background:#ddd;border-radius:0px"></div>
<div class="t" style="left:48.299999999999955px;top:-4px;font-size:7.0px;color:#d8d8d8">wear2</div>
<svg style="position:absolute;left:145.89999999999998px;top:-2.700000000000003px;overflow:visible" width="7" height="7"><rect x="0" y="0" width="7" height="7" rx="1" fill="#e6e6e6"/><path d="M1.5 3.6 L3 5 L5.5 1.8" fill="none" stroke="#222" stroke-width="1"/></svg>
<svg style="position:absolute;left:156.20000000000005px;top:-3.200000000000003px;overflow:visible" width="10" height="8"><path d="M0.8 4 C3 0.8 7 0.8 9.2 4 C7 7.2 3 7.2 0.8 4 Z" fill="none" stroke="#ddd" stroke-width="0.9"/><circle cx="5" cy="4" r="1.4" fill="#ddd"/></svg>
<svg style="position:absolute;left:168.0px;top:-3.700000000000003px;overflow:visible" width="10" height="9"><path d="M0.8 2.3 H3 L3.8 1 H6.2 L7 2.3 H9.2 V8 H0.8 Z" fill="#ddd"/><circle cx="5" cy="5" r="1.7" fill="#282828"/></svg>
<svg style="position:absolute;left:38.0px;top:8.5px;overflow:visible" width="5" height="8"><path d="M1 1 L3.8 4 L1 7" fill="none" stroke="#aaa" stroke-width="0.9"/></svg>
<div class="t" style="left:59.60000000000002px;top:7.5px;font-size:7.0px;color:#d8d8d8">acc</div>
<svg style="position:absolute;left:38.0px;top:19.599999999999994px;overflow:visible" width="5" height="8"><path d="M1 1 L3.8 4 L1 7" fill="none" stroke="#aaa" stroke-width="0.9"/></svg>
<div class="t" style="left:59.60000000000002px;top:18.599999999999994px;font-size:7.0px;color:#f0a336">inner</div>
<svg style="position:absolute;left:38.0px;top:31.799999999999997px;overflow:visible" width="5" height="8"><path d="M1 1 L3.8 4 L1 7" fill="none" stroke="#aaa" stroke-width="0.9"/></svg>
<div class="t" style="left:59.60000000000002px;top:30.799999999999997px;font-size:7.0px;color:#9a9a9a">skirt</div>
<svg style="position:absolute;left:38.0px;top:43.2px;overflow:visible" width="5" height="8"><path d="M1 1 L3.8 4 L1 7" fill="none" stroke="#aaa" stroke-width="0.9"/></svg>
<div class="t" style="left:59.60000000000002px;top:42.2px;font-size:7.0px;color:#9a9a9a">skirt_frill</div>
<svg style="position:absolute;left:38.0px;top:54.69999999999999px;overflow:visible" width="5" height="8"><path d="M1 1 L3.8 4 L1 7" fill="none" stroke="#aaa" stroke-width="0.9"/></svg>
<div class="t" style="left:59.60000000000002px;top:53.69999999999999px;font-size:7.0px;color:#9a9a9a">skirtA</div>
<svg style="position:absolute;left:47.0px;top:58.69999999999999px;overflow:visible" width="0" height="0"></svg>
<svg style="position:absolute;left:47.5px;top:7.5px;overflow:visible" width="9" height="9"><rect x="0.3" y="0.3" width="8.4" height="2.2" fill="#e8e8e8"/><path d="M0.8 3.2 H8.2 V8.5 H0.8 Z" fill="#e8e8e8"/><rect x="3" y="4" width="3" height="1" fill="#282828"/></svg>
<svg style="position:absolute;left:83.79999999999995px;top:7.5px;overflow:visible" width="9" height="9"><path d="M1 1.2 H8 L4.5 8 Z" fill="none" stroke="#e08a3c" stroke-width="1.1" stroke-linejoin="round"/></svg>
<div class="t" style="left:91.5px;top:9.5px;font-size:5px;color:#bbb">0</div>
<svg style="position:absolute;left:145.89999999999998px;top:9.0px;overflow:visible" width="7" height="7"><rect x="0" y="0" width="7" height="7" rx="1" fill="#e6e6e6"/><path d="M1.5 3.6 L3 5 L5.5 1.8" fill="none" stroke="#222" stroke-width="1"/></svg>
<svg style="position:absolute;left:156.20000000000005px;top:8.5px;overflow:visible" width="10" height="8"><path d="M0.8 4 C3 0.8 7 0.8 9.2 4 C7 7.2 3 7.2 0.8 4 Z" fill="none" stroke="#ddd" stroke-width="0.9"/><circle cx="5" cy="4" r="1.4" fill="#ddd"/></svg>
<svg style="position:absolute;left:168.0px;top:8.0px;overflow:visible" width="10" height="9"><path d="M0.8 2.3 H3 L3.8 1 H6.2 L7 2.3 H9.2 V8 H0.8 Z" fill="#ddd"/><circle cx="5" cy="5" r="1.7" fill="#282828"/></svg>
<div style="position:absolute;left:46.5px;top:18.5px;width:11px;height:10.5px;background:#5a6e96;border-radius:2px"></div>
<svg style="position:absolute;left:47.5px;top:19.099999999999994px;overflow:visible" width="9" height="9"><path d="M1 1.2 H8 L4.5 8 Z" fill="none" stroke="#f0a040" stroke-width="1.1" stroke-linejoin="round"/></svg>
<svg style="position:absolute;left:88.0px;top:19.099999999999994px;overflow:visible" width="9" height="9"><path d="M1.3 7.7 L4.6 4.4" stroke="#5f8fd8" stroke-width="1.5" stroke-linecap="round"/><path d="M7.9 3.6 A2.3 2.3 0 1 1 5.4 1.1" fill="none" stroke="#5f8fd8" stroke-width="1.2"/></svg>
<svg style="position:absolute;left:100.29999999999995px;top:19.099999999999994px;overflow:visible" width="9" height="9"><g fill="#bbb"><rect x="3.2" y="0.5" width="2.6" height="2.4"/><rect x="3.2" y="3.4" width="2.6" height="2.4"/><rect x="3.2" y="6.3" width="2.6" height="2.4"/></g><g fill="none" stroke="#bbb" stroke-width="0.6"><rect x="0.6" y="2" width="2" height="2"/><rect x="0.6" y="5" width="2" height="2"/><rect x="6.4" y="2" width="2" height="2"/><rect x="6.4" y="5" width="2" height="2"/></g></svg>
<svg style="position:absolute;left:111.10000000000002px;top:18.599999999999994px;overflow:visible" width="10" height="10"><path d="M1.5 2 L8.5 2 L5 8.5 Z" fill="none" stroke="#1fc39a" stroke-width="0.9"/><circle cx="1.5" cy="2" r="1.1" fill="#1fc39a"/><circle cx="8.5" cy="2" r="1.1" fill="#1fc39a"/><circle cx="5" cy="8.5" r="1.1" fill="#1fc39a"/></svg>
<svg style="position:absolute;left:156.20000000000005px;top:19.599999999999994px;overflow:visible" width="10" height="8"><path d="M0.8 4 C3 0.8 7 0.8 9.2 4 C7 7.2 3 7.2 0.8 4 Z" fill="none" stroke="#e8e8e8" stroke-width="0.9"/><circle cx="5" cy="4" r="1.4" fill="#e8e8e8"/></svg>
<svg style="position:absolute;left:168.0px;top:19.099999999999994px;overflow:visible" width="10" height="9"><path d="M0.8 2.3 H3 L3.8 1 H6.2 L7 2.3 H9.2 V8 H0.8 Z" fill="#e8e8e8"/><circle cx="5" cy="5" r="1.7" fill="#282828"/></svg>
<svg style="position:absolute;left:47.5px;top:31.299999999999997px;overflow:visible" width="9" height="9"><path d="M1 1.2 H8 L4.5 8 Z" fill="none" stroke="#b0702f" stroke-width="1.1" stroke-linejoin="round"/></svg>
<svg style="position:absolute;left:85.5px;top:31.299999999999997px;overflow:visible" width="9" height="9"><path d="M1.3 7.7 L4.6 4.4" stroke="#4a6fae" stroke-width="1.5" stroke-linecap="round"/><path d="M7.9 3.6 A2.3 2.3 0 1 1 5.4 1.1" fill="none" stroke="#4a6fae" stroke-width="1.2"/></svg>
<svg style="position:absolute;left:97.0px;top:31.299999999999997px;overflow:visible" width="9" height="9"><g fill="#8a8a8a"><rect x="3.2" y="0.5" width="2.6" height="2.4"/><rect x="3.2" y="3.4" width="2.6" height="2.4"/><rect x="3.2" y="6.3" width="2.6" height="2.4"/></g><g fill="none" stroke="#8a8a8a" stroke-width="0.6"><rect x="0.6" y="2" width="2" height="2"/><rect x="0.6" y="5" width="2" height="2"/><rect x="6.4" y="2" width="2" height="2"/><rect x="6.4" y="5" width="2" height="2"/></g></svg>
<svg style="position:absolute;left:108.5px;top:30.799999999999997px;overflow:visible" width="10" height="10"><path d="M1.5 2 L8.5 2 L5 8.5 Z" fill="none" stroke="#1c9a7c" stroke-width="0.9"/><circle cx="1.5" cy="2" r="1.1" fill="#1c9a7c"/><circle cx="8.5" cy="2" r="1.1" fill="#1c9a7c"/><circle cx="5" cy="8.5" r="1.1" fill="#1c9a7c"/></svg>
<svg style="position:absolute;left:156.20000000000005px;top:31.799999999999997px;overflow:visible" width="10" height="8"><path d="M0.8 3 C3 6 7 6 9.2 3" fill="none" stroke="#bbb" stroke-width="0.9"/></svg>
<svg style="position:absolute;left:168.0px;top:31.299999999999997px;overflow:visible" width="10" height="9"><path d="M0.8 2.3 H3 L3.8 1 H6.2 L7 2.3 H9.2 V8 H0.8 Z" fill="#dcdcdc"/><circle cx="5" cy="5" r="1.7" fill="#282828"/></svg>
<svg style="position:absolute;left:47.5px;top:42.7px;overflow:visible" width="9" height="9"><path d="M1 1.2 H8 L4.5 8 Z" fill="none" stroke="#b0702f" stroke-width="1.1" stroke-linejoin="round"/></svg>
<svg style="position:absolute;left:98.20000000000005px;top:42.7px;overflow:visible" width="9" height="9"><path d="M1.3 7.7 L4.6 4.4" stroke="#4a6fae" stroke-width="1.5" stroke-linecap="round"/><path d="M7.9 3.6 A2.3 2.3 0 1 1 5.4 1.1" fill="none" stroke="#4a6fae" stroke-width="1.2"/></svg>
<svg style="position:absolute;left:110.20000000000005px;top:42.7px;overflow:visible" width="9" height="9"><g fill="#8a8a8a"><rect x="3.2" y="0.5" width="2.6" height="2.4"/><rect x="3.2" y="3.4" width="2.6" height="2.4"/><rect x="3.2" y="6.3" width="2.6" height="2.4"/></g><g fill="none" stroke="#8a8a8a" stroke-width="0.6"><rect x="0.6" y="2" width="2" height="2"/><rect x="0.6" y="5" width="2" height="2"/><rect x="6.4" y="2" width="2" height="2"/><rect x="6.4" y="5" width="2" height="2"/></g></svg>
<svg style="position:absolute;left:121.5px;top:42.2px;overflow:visible" width="10" height="10"><path d="M1.5 2 L8.5 2 L5 8.5 Z" fill="none" stroke="#1c9a7c" stroke-width="0.9"/><circle cx="1.5" cy="2" r="1.1" fill="#1c9a7c"/><circle cx="8.5" cy="2" r="1.1" fill="#1c9a7c"/><circle cx="5" cy="8.5" r="1.1" fill="#1c9a7c"/></svg>
<svg style="position:absolute;left:156.20000000000005px;top:43.2px;overflow:visible" width="10" height="8"><path d="M0.8 3 C3 6 7 6 9.2 3" fill="none" stroke="#bbb" stroke-width="0.9"/></svg>
<svg style="position:absolute;left:168.0px;top:42.7px;overflow:visible" width="10" height="9"><path d="M0.8 2.3 H3 L3.8 1 H6.2 L7 2.3 H9.2 V8 H0.8 Z" fill="#dcdcdc"/><circle cx="5" cy="5" r="1.7" fill="#282828"/></svg>
<svg style="position:absolute;left:47.5px;top:54.19999999999999px;overflow:visible" width="9" height="9"><path d="M1 1.2 H8 L4.5 8 Z" fill="none" stroke="#b0702f" stroke-width="1.1" stroke-linejoin="round"/></svg>
<svg style="position:absolute;left:88.0px;top:54.19999999999999px;overflow:visible" width="9" height="9"><path d="M1.3 7.7 L4.6 4.4" stroke="#4a6fae" stroke-width="1.5" stroke-linecap="round"/><path d="M7.9 3.6 A2.3 2.3 0 1 1 5.4 1.1" fill="none" stroke="#4a6fae" stroke-width="1.2"/></svg>
<svg style="position:absolute;left:100.29999999999995px;top:54.19999999999999px;overflow:visible" width="9" height="9"><g fill="#8a8a8a"><rect x="3.2" y="0.5" width="2.6" height="2.4"/><rect x="3.2" y="3.4" width="2.6" height="2.4"/><rect x="3.2" y="6.3" width="2.6" height="2.4"/></g><g fill="none" stroke="#8a8a8a" stroke-width="0.6"><rect x="0.6" y="2" width="2" height="2"/><rect x="0.6" y="5" width="2" height="2"/><rect x="6.4" y="2" width="2" height="2"/><rect x="6.4" y="5" width="2" height="2"/></g></svg>
<svg style="position:absolute;left:111.89999999999998px;top:53.69999999999999px;overflow:visible" width="10" height="10"><path d="M1.5 2 L8.5 2 L5 8.5 Z" fill="none" stroke="#1c9a7c" stroke-width="0.9"/><circle cx="1.5" cy="2" r="1.1" fill="#1c9a7c"/><circle cx="8.5" cy="2" r="1.1" fill="#1c9a7c"/><circle cx="5" cy="8.5" r="1.1" fill="#1c9a7c"/></svg>
<svg style="position:absolute;left:156.20000000000005px;top:54.69999999999999px;overflow:visible" width="10" height="8"><path d="M0.8 3 C3 6 7 6 9.2 3" fill="none" stroke="#bbb" stroke-width="0.9"/></svg>
<svg style="position:absolute;left:168.0px;top:54.19999999999999px;overflow:visible" width="10" height="9"><path d="M0.8 2.3 H3 L3.8 1 H6.2 L7 2.3 H9.2 V8 H0.8 Z" fill="#dcdcdc"/><circle cx="5" cy="5" r="1.7" fill="#282828"/></svg>
<div style="position:absolute;left:181.0px;top:18px;width:1.6px;height:15px;background:#4a4a4a;border-radius:1px"></div>
</div>
<div class="a" style="left:839.5px;top:139.5px;width:184.5px;height:409px;background:#303030;border-radius:4px;"></div>
<div class="a" style="left:846px;top:142px;width:17px;height:10px;background:#262626;border-radius:2px;"></div>
<svg class="a" style="left:847px;top:142.5px;" width="11" height="9" viewBox="0 0 11 9"><rect x="0.5" y="0.5" width="8" height="3.4" rx="1.7" fill="#e6e6e6"/><rect x="0.5" y="5" width="8" height="3.4" rx="1.7" fill="#e6e6e6"/><circle cx="6.7" cy="2.2" r="1.1" fill="#262626"/><circle cx="6.7" cy="6.7" r="1.1" fill="#262626"/></svg>
<svg class="a" style="left:856.5px;top:144.2px;" width="6" height="6" viewBox="0 0 6 6"><path d="M1.5 2.25 L3 3.75 L4.5 2.25" fill="none" stroke="#bbb" stroke-width="0.8"/></svg>
<div class="a" style="left:897.5px;top:141.9px;width:68.2px;height:9.6px;background:#1e1e1e;border-radius:2.5px;"></div>
<svg class="a" style="left:900.5px;top:142.3px;" width="9" height="9" viewBox="0 0 9 9"><circle cx="5.5" cy="3.5" r="2.6" fill="none" stroke="#ccc" stroke-width="0.9"/><path d="M3.6 5.4 L0.8 8.2" stroke="#ccc" stroke-width="1"/></svg>
<div class="t" style="left:912.5px;top:142.5px;font-size:7.0px;color:#6a6a6a;">Search</div>
<div class="a" style="left:1008.5px;top:142px;width:10.5px;height:10px;background:#262626;border-radius:2px;"></div>
<svg class="a" style="left:1010.7px;top:144.2px;" width="6" height="6" viewBox="0 0 6 6"><path d="M1.4 2.2 L3 3.8 L4.6 2.2" fill="none" stroke="#ccc" stroke-width="0.9"/></svg>
<div class="a" style="left:839.5px;top:154px;width:16.5px;height:394.5px;background:#1f1f1f;border-radius:0px;border-radius:0 0 0 4px"></div>
<div class="a" style="left:841px;top:182px;width:15px;height:11px;background:#303030;border-radius:2px;border-radius:2px 0 0 2px"></div>
<svg class="a" style="left:843px;top:161px;" width="10" height="10" viewBox="0 0 10 10"><path d="M2.5 1 V5.5" stroke="#ccc" stroke-width="0.9"/><circle cx="2.5" cy="7.2" r="1.8" fill="#ccc"/><path d="M6.8 9 V4.5 M5 1.2 V3.2 L6.8 4.5 L8.6 3.2 V1.2" fill="none" stroke="#ddd" stroke-width="1.1"/></svg>
<svg class="a" style="left:843px;top:182px;" width="10" height="10" viewBox="0 0 10 10"><rect x="1" y="3" width="8" height="5.8" fill="none" stroke="#ddd" stroke-width="1"/><path d="M1 3 L2.5 1 M4 3 L5.5 1 M7 3 L8.5 1" stroke="#ddd" stroke-width="0.8"/><rect x="2.5" y="4.5" width="5" height="1.2" fill="#ddd"/></svg>
<svg class="a" style="left:843px;top:198.5px;" width="10" height="10" viewBox="0 0 10 10"><rect x="1" y="1" width="8" height="4.5" fill="#ccc"/><rect x="2.2" y="5.5" width="5.6" height="3.5" fill="none" stroke="#ccc" stroke-width="0.8"/><rect x="2" y="2" width="6" height="1" fill="#1f1f1f"/></svg>
<svg class="a" style="left:843px;top:214px;" width="10" height="10" viewBox="0 0 10 10"><rect x="3" y="0.8" width="6" height="5.5" fill="#aaa"/><rect x="0.8" y="3" width="6" height="6" fill="#666" stroke="#ccc" stroke-width="0.7"/><path d="M1.8 8.3 L3.8 5.5 L5.8 8.3 Z" fill="#ddd"/></svg>
<svg class="a" style="left:843px;top:231px;" width="10" height="10" viewBox="0 0 10 10"><path d="M1 8.5 L3.5 2.5 L6 8.5 Z" fill="#ccc"/><circle cx="6.5" cy="6.8" r="2.3" fill="#1f1f1f" stroke="#ccc" stroke-width="0.9"/><circle cx="7.5" cy="2" r="1.3" fill="#ccc"/></svg>
<svg class="a" style="left:843px;top:246.5px;" width="10" height="10" viewBox="0 0 10 10"><circle cx="5" cy="5" r="3.9" fill="none" stroke="#d85a5a" stroke-width="1.1"/><path d="M2.2 3.2 C3.8 4.2 5.2 2.8 6.2 1.4 M1.6 6.2 C3 5.8 4.2 7.2 6 6.6 C7 6.3 7.6 7.6 8.6 6.2" fill="none" stroke="#d85a5a" stroke-width="1"/><circle cx="4.6" cy="4.6" r="1.3" fill="#d85a5a"/></svg>
<svg class="a" style="left:843px;top:266px;" width="10" height="10" viewBox="0 0 10 10"><rect x="1" y="1" width="8" height="2.2" fill="#ccc"/><path d="M1.5 3.8 H8.5 V9 H1.5 Z" fill="none" stroke="#ccc" stroke-width="0.9"/><rect x="3.5" y="5" width="3" height="1" fill="#ccc"/></svg>
<svg class="a" style="left:843px;top:287.2px;" width="10" height="10" viewBox="0 0 10 10"><path d="M1 2.5 V1 H2.5 M7.5 1 H9 V2.5 M9 7.5 V9 H7.5 M2.5 9 H1 V7.5" fill="none" stroke="#e08a3c" stroke-width="0.9"/><rect x="2.5" y="2.5" width="5" height="5" fill="#e08a3c"/></svg>
<svg class="a" style="left:843px;top:303px;" width="10" height="10" viewBox="0 0 10 10"><path d="M1.4 8.6 L5 5" stroke="#5b8fe0" stroke-width="1.8" stroke-linecap="round"/><path d="M8.8 4 A2.7 2.7 0 1 1 6 1.2" fill="none" stroke="#5b8fe0" stroke-width="1.5"/></svg>
<svg class="a" style="left:843px;top:319.5px;" width="10" height="10" viewBox="0 0 10 10"><circle cx="1.8" cy="1.8" r="1.3" fill="#6aa0e8"/><circle cx="8.2" cy="8.2" r="1.3" fill="#6aa0e8"/><circle cx="1.8" cy="8" r="1.1" fill="#6aa0e8"/><path d="M1.8 1.8 L8.2 8.2 M1.8 1.8 V8" stroke="#6aa0e8" stroke-width="0.8"/></svg>
<svg class="a" style="left:843px;top:335.5px;" width="10" height="10" viewBox="0 0 10 10"><circle cx="5" cy="5" r="3.8" fill="none" stroke="#5b8fe0" stroke-width="1"/><circle cx="5" cy="5" r="1.6" fill="#5b8fe0"/><path d="M6 1.5 L9.5 0.5" stroke="#1f1f1f" stroke-width="1.5"/></svg>
<svg class="a" style="left:843px;top:351px;" width="10" height="10" viewBox="0 0 10 10"><ellipse cx="4" cy="6" rx="3.2" ry="2.5" fill="none" stroke="#5b8fe0" stroke-width="1" transform="rotate(-30 4 6)"/><ellipse cx="6" cy="4" rx="3.2" ry="2.5" fill="none" stroke="#5b8fe0" stroke-width="1" transform="rotate(-30 6 4)"/></svg>
<svg class="a" style="left:843px;top:367px;" width="10" height="10" viewBox="0 0 10 10"><path d="M1.5 2 L8.5 2 L5 8.5 Z" fill="none" stroke="#1fc39a" stroke-width="1"/><circle cx="1.5" cy="2" r="1.2" fill="#1fc39a"/><circle cx="8.5" cy="2" r="1.2" fill="#1fc39a"/><circle cx="5" cy="8.5" r="1.2" fill="#1fc39a"/></svg>
<svg class="a" style="left:843px;top:383px;" width="10" height="10" viewBox="0 0 10 10"><circle cx="5" cy="5" r="4" fill="#e05a5a"/><path d="M5 1 A4 4 0 0 1 9 5 L5 5 Z M5 5 L1 5 A4 4 0 0 0 5 9 Z" fill="#f3c4c4"/></svg>
<div class="a" style="left:1019.3px;top:283px;width:1.8px;height:112px;background:#454545;border-radius:1px;"></div>
<svg class="a" style="left:862px;top:159.5px;" width="11" height="10" viewBox="0 0 11 10"><path d="M1 8.5 L3.5 2.5 L6 8.5 Z" fill="#ddd"/><circle cx="6.5" cy="6.8" r="2.3" fill="#303030" stroke="#ddd" stroke-width="0.9"/><circle cx="7.5" cy="2" r="1.3" fill="#ddd"/></svg>
<div class="t" style="left:876.6px;top:160.29999999999998px;font-size:7.0px;color:#e0e0e0;">Scene</div>
<svg class="a" style="left:1008px;top:159.5px;" width="10" height="10" viewBox="0 0 10 10"><path d="M2 9 L5 6 M3.5 4 L7 1 L9 3.5 L6 6.5 Z" fill="none" stroke="#aaa" stroke-width="0.9"/></svg>
<div class="t" style="right:102.39999999999998px;top:181.7px;font-size:7.0px;color:#cfcfcf;text-align:right;">Render Engine</div>
<div class="a" style="left:928.2px;top:180.7px;width:90.4px;height:10.6px;background:#282828;border-radius:2px;"></div>
<div class="t" style="left:932.2px;top:181.7px;font-size:7.0px;color:#dedede;">Cycles</div>
<svg class="a" style="left:1009.6px;top:183.3px;" width="6" height="6" viewBox="0 0 6 6"><path d="M1.4 2.2 L3 3.8 L4.6 2.2" fill="none" stroke="#ccc" stroke-width="0.9"/></svg>
<div class="t" style="right:102.39999999999998px;top:196.1px;font-size:7.0px;color:#cfcfcf;text-align:right;">Feature Set</div>
<div class="a" style="left:928.2px;top:195.1px;width:90.4px;height:10.6px;background:#282828;border-radius:2px;"></div>
<div class="t" style="left:932.2px;top:196.1px;font-size:7.0px;color:#dedede;">Supported</div>
<svg class="a" style="left:1009.6px;top:197.70000000000002px;" width="6" height="6" viewBox="0 0 6 6"><path d="M1.4 2.2 L3 3.8 L4.6 2.2" fill="none" stroke="#ccc" stroke-width="0.9"/></svg>
<div class="t" style="right:102.39999999999998px;top:210.6px;font-size:7.0px;color:#cfcfcf;text-align:right;">Device</div>
<div class="a" style="left:928.2px;top:209.6px;width:90.4px;height:10.6px;background:#282828;border-radius:2px;"></div>
<div class="t" style="left:932.2px;top:210.6px;font-size:7.0px;color:#dedede;">GPU Compute</div>
<svg class="a" style="left:1009.6px;top:212.20000000000002px;" width="6" height="6" viewBox="0 0 6 6"><path d="M1.4 2.2 L3 3.8 L4.6 2.2" fill="none" stroke="#ccc" stroke-width="0.9"/></svg>
<div class="a" style="left:927.7px;top:225.95px;width:7.3px;height:7.3px;background:#545454;border-radius:1.3px;"></div>
<div class="t" style="left:937px;top:225.1px;font-size:7.0px;color:#d6d6d6;">Open Shading Language</div>
<div class="a" style="left:861.4px;top:241.6px;width:157.2px;height:254.6px;background:#3a3a3a;border-radius:3px;"></div>
<svg class="a" style="left:866px;top:245.9px;" width="6" height="6" viewBox="0 0 6 6"><path d="M0 1.5 L3 4.5 L6 1.5" fill="none" stroke="#ccc" stroke-width="0.9"/></svg>
<div class="t" style="left:873px;top:244.0px;font-size:7.0px;color:#e0e0e0;">Bake</div>
<svg class="a" style="left:1009px;top:245.5px;" width="8" height="6" viewBox="0 0 8 6"><path d="M0.5 1.5 H7.5 M0.5 4 H7.5" stroke="#555" stroke-width="0.8"/></svg>
<div class="a" style="left:861.4px;top:254.5px;width:157.2px;height:241.7px;background:#383838;border-radius:0px;border-radius:0 0 3px 3px"></div>
<div class="a" style="left:866px;top:260.3px;width:147.8px;height:10.7px;background:#545454;border-radius:2.5px;"></div>
<svg class="a" style="left:867.5px;top:260.8px;" width="10" height="10" viewBox="0 0 10 10"><path d="M1 1.5 H5 L8.5 3.5 L6.5 5.5 L5 8.5 H1 Z" fill="none" stroke="#ddd" stroke-width="0.9"/><path d="M2 2.5 H4.5 L7 3.8 L5.5 5 L4.4 7.5 H2 Z" fill="#ddd"/></svg>
<div class="t" style="left:794.5px;width:300px;top:261.3px;font-size:7.0px;color:#e6e6e6;text-align:center;">Bake</div>
<div class="a" style="left:928.2px;top:276.35px;width:7.3px;height:7.3px;background:#545454;border-radius:1.3px;"></div>
<div class="t" style="left:937.5px;top:275.5px;font-size:7.0px;color:#d6d6d6;">Bake from Multires</div>
<div class="a" style="left:875px;top:287.8px;width:142.8px;height:13px;background:#383838;border-radius:0px;border:1px solid #5d7f84"></div>
<div class="t" style="right:102.29999999999995px;top:290.2px;font-size:7.0px;color:#cfcfcf;text-align:right;">Bake Type</div>
<div class="a" style="left:928.2px;top:289.2px;width:84.8px;height:10.6px;background:#282828;border-radius:2px;"></div>
<div class="t" style="left:932.2px;top:290.2px;font-size:7.0px;color:#dedede;">Diffuse</div>
<svg class="a" style="left:1004.0px;top:291.8px;" width="6" height="6" viewBox="0 0 6 6"><path d="M1.4 2.2 L3 3.8 L4.6 2.2" fill="none" stroke="#ccc" stroke-width="0.9"/></svg>
<div class="t" style="right:102.29999999999995px;top:304.5px;font-size:7.0px;color:#cfcfcf;text-align:right;">View From</div>
<div class="a" style="left:928.2px;top:303.5px;width:84.8px;height:10.6px;background:#282828;border-radius:2px;"></div>
<div class="t" style="left:932.2px;top:304.5px;font-size:7.0px;color:#dedede;">Above Surface</div>
<svg class="a" style="left:1004.0px;top:306.1px;" width="6" height="6" viewBox="0 0 6 6"><path d="M1.4 2.2 L3 3.8 L4.6 2.2" fill="none" stroke="#ccc" stroke-width="0.9"/></svg>
<div class="a" style="left:861.4px;top:334px;width:157.2px;height:48px;background:#323232;border-radius:0px;"></div>
<div class="a" style="left:861.4px;top:409.6px;width:157.2px;height:36.6px;background:#323232;border-radius:0px;"></div>
<svg class="a" style="left:874.3px;top:324.6px;" width="6" height="6" viewBox="0 0 6 6"><path d="M0 1.5 L3 4.5 L6 1.5" fill="none" stroke="#ccc" stroke-width="0.9"/></svg>
<div class="t" style="left:881.5px;top:323.0px;font-size:7.0px;color:#d6d6d6;">Influence</div>
<div class="a" style="left:875px;top:338.4px;width:142.8px;height:42.1px;background:#323232;border-radius:0px;border:1px solid #5d7f84"></div>
<div class="t" style="left:880px;top:343.0px;font-size:7.0px;color:#cfcfcf;">Contributions</div>
<div class="a" style="left:928.2px;top:343.65000000000003px;width:7.3px;height:7.3px;background:#545454;border-radius:1.3px;"></div>
<div class="t" style="left:937.5px;top:342.8px;font-size:7.0px;color:#d6d6d6;">Direct</div>
<div class="a" style="left:928.2px;top:355.05px;width:7.3px;height:7.3px;background:#545454;border-radius:1.3px;"></div>
<div class="t" style="left:937.5px;top:354.2px;font-size:7.0px;color:#d6d6d6;">Indirect</div>
<svg class="a" style="left:928.2px;top:366.75px;" width="7.3" height="7.3" viewBox="0 0 7.3 7.3"><rect x="0" y="0" width="7.3" height="7.3" rx="1.3" fill="#4772b3"/><path d="M1.6 3.6 L3 5.1 L5.6 1.9" fill="none" stroke="#fff" stroke-width="1.1"/></svg>
<div class="t" style="left:937.5px;top:365.9px;font-size:7.0px;color:#d6d6d6;">Color</div>
<svg class="a" style="left:873.5px;top:386px;" width="6" height="6" viewBox="0 0 6 6"><path d="M1.5 0 L4.5 3 L1.5 6" fill="none" stroke="#ccc" stroke-width="0.9"/></svg>
<div class="a" style="left:881.5px;top:384.95000000000005px;width:7.3px;height:7.3px;background:#545454;border-radius:1.3px;"></div>
<div class="t" style="left:889.8px;top:384.09999999999997px;font-size:7.0px;color:#d6d6d6;">Selected to Active</div>
<svg class="a" style="left:874.3px;top:400.6px;" width="6" height="6" viewBox="0 0 6 6"><path d="M0 1.5 L3 4.5 L6 1.5" fill="none" stroke="#ccc" stroke-width="0.9"/></svg>
<div class="t" style="left:881.5px;top:398.8px;font-size:7.0px;color:#d6d6d6;">Output</div>
<div class="t" style="right:102.29999999999995px;top:416.0px;font-size:7.0px;color:#cfcfcf;text-align:right;">Target</div>
<div class="a" style="left:928.2px;top:415.0px;width:84.8px;height:10.6px;background:#282828;border-radius:2px;"></div>
<div class="t" style="left:932.2px;top:416.0px;font-size:7.0px;color:#dedede;">Image Textures</div>
<svg class="a" style="left:1004.0px;top:417.6px;" width="6" height="6" viewBox="0 0 6 6"><path d="M1.4 2.2 L3 3.8 L4.6 2.2" fill="none" stroke="#ccc" stroke-width="0.9"/></svg>
<svg class="a" style="left:928px;top:431.55px;" width="7.3" height="7.3" viewBox="0 0 7.3 7.3"><rect x="0" y="0" width="7.3" height="7.3" rx="1.3" fill="#4772b3"/><path d="M1.6 3.6 L3 5.1 L5.6 1.9" fill="none" stroke="#fff" stroke-width="1.1"/></svg>
<div class="t" style="left:937.6px;top:430.7px;font-size:7.0px;color:#d6d6d6;">Clear Image</div>
<svg class="a" style="left:873.8px;top:451.2px;" width="6" height="6" viewBox="0 0 6 6"><path d="M0 1.5 L3 4.5 L6 1.5" fill="none" stroke="#ccc" stroke-width="0.9"/></svg>
<div class="t" style="left:880.7px;top:449.3px;font-size:7.0px;color:#d6d6d6;">Margin</div>
<div class="a" style="left:861.4px;top:460.6px;width:157.2px;height:35.6px;background:#323232;border-radius:0px;border-radius:0 0 3px 3px"></div>
<div class="t" style="right:102px;top:466.4px;font-size:7.0px;color:#cfcfcf;text-align:right;">Type</div>
<div class="a" style="left:928px;top:465.4px;width:85.5px;height:10.6px;background:#282828;border-radius:2px;"></div>
<div class="t" style="left:932px;top:466.4px;font-size:7.0px;color:#dedede;">Adjacent Faces</div>
<svg class="a" style="left:1004.5px;top:468.0px;" width="6" height="6" viewBox="0 0 6 6"><path d="M1.4 2.2 L3 3.8 L4.6 2.2" fill="none" stroke="#ccc" stroke-width="0.9"/></svg>
<div class="a" style="left:897.8px;top:475px;width:120.6px;height:19px;background:#2e2e2e;border-radius:0px;border:1px solid #5d7f84"></div>
<div class="t" style="right:101.79999999999995px;top:481.3px;font-size:7.0px;color:#cfcfcf;text-align:right;">Size</div>
<div class="a" style="left:928px;top:480.2px;width:85.5px;height:10.8px;background:#545454;border-radius:2.5px;"></div>
<div class="t" style="left:820.7px;width:300px;top:481.09999999999997px;font-size:7.0px;color:#e6e6e6;text-align:center;">0 px</div>
<div class="a" style="left:861.4px;top:497px;width:157.2px;height:13.9px;background:#3a3a3a;border-radius:3px;"></div>
<svg class="a" style="left:865.5px;top:501.8px;" width="6" height="6" viewBox="0 0 6 6"><path d="M1.6 0.20000000000000018 L4.4 3 L1.6 5.8" fill="none" stroke="#ccc" stroke-width="0.9"/></svg>
<div class="t" style="left:873px;top:500.8px;font-size:7.0px;color:#e0e0e0;">Sampling</div>
<svg class="a" style="left:1009px;top:501.5px;" width="8" height="6" viewBox="0 0 8 6"><path d="M0.5 1.5 H7.5 M0.5 4 H7.5" stroke="#555" stroke-width="0.8"/></svg>
<div class="a" style="left:861.4px;top:512.2px;width:157.2px;height:13.9px;background:#3a3a3a;border-radius:3px;"></div>
<svg class="a" style="left:865.5px;top:516.8px;" width="6" height="6" viewBox="0 0 6 6"><path d="M1.6 0.20000000000000018 L4.4 3 L1.6 5.8" fill="none" stroke="#ccc" stroke-width="0.9"/></svg>
<div class="t" style="left:873px;top:515.7px;font-size:7.0px;color:#e0e0e0;">Light Paths</div>
<svg class="a" style="left:992.5px;top:514.5px;" width="10" height="10" viewBox="0 0 10 10"><g fill="#ddd"><rect x="0.8" y="0.8" width="1.6" height="1.6"/><rect x="0.8" y="4" width="1.6" height="1.6"/><rect x="0.8" y="7.2" width="1.6" height="1.6"/><rect x="3.8" y="1" width="5" height="1.1"/><rect x="3.8" y="4.2" width="5" height="1.1"/><rect x="3.8" y="7.4" width="5" height="1.1"/></g></svg>
<svg class="a" style="left:1009px;top:516.5px;" width="8" height="6" viewBox="0 0 8 6"><path d="M0.5 1.5 H7.5 M0.5 4 H7.5" stroke="#555" stroke-width="0.8"/></svg>
<div class="a" style="left:861.4px;top:527.5px;width:157.2px;height:13.9px;background:#3a3a3a;border-radius:3px;"></div>
<svg class="a" style="left:865.5px;top:532px;" width="6" height="6" viewBox="0 0 6 6"><path d="M1.6 0.20000000000000018 L4.4 3 L1.6 5.8" fill="none" stroke="#ccc" stroke-width="0.9"/></svg>
<div class="t" style="left:873px;top:530.9000000000001px;font-size:7.0px;color:#e0e0e0;">Volumes</div>
<svg class="a" style="left:1009px;top:531.5px;" width="8" height="6" viewBox="0 0 8 6"><path d="M0.5 1.5 H7.5 M0.5 4 H7.5" stroke="#555" stroke-width="0.8"/></svg>
<div class="a" style="left:861.4px;top:542.9px;width:157.2px;height:5.6px;background:#3a3a3a;border-radius:3px;border-radius:3px 3px 0 0"></div>
<svg class="a" style="left:865.5px;top:545px;" width="6" height="6" viewBox="0 0 6 6"><path d="M1.6 0.20000000000000018 L4.4 3 L1.6 5.8" fill="none" stroke="#ccc" stroke-width="0.9"/></svg>
<div class="a" style="left:0px;top:548.5px;width:1024px;height:13.5px;background:#191919;border-radius:0px;"></div>
<svg class="a" style="left:5.5px;top:550px;" width="8" height="11" viewBox="0 0 8 11"><rect x="0.6" y="0.6" width="6.3" height="9.5" rx="2.6" fill="none" stroke="#aaa" stroke-width="0.9"/><rect x="1.4" y="1.3" width="2.4" height="3.8" fill="#aaa"/></svg>
<div class="t" style="left:14.8px;top:550.6px;font-size:7.0px;color:#a8a8a8;">Select</div>
<svg class="a" style="left:41px;top:550px;" width="8" height="11" viewBox="0 0 8 11"><rect x="0.6" y="0.6" width="6.3" height="9.5" rx="2.6" fill="none" stroke="#aaa" stroke-width="0.9"/><rect x="2.9" y="1.3" width="1.8" height="3.8" fill="#ccc"/></svg>
<div class="t" style="left:50px;top:550.6px;font-size:7.0px;color:#a8a8a8;">Rotate View</div>
<svg class="a" style="left:93px;top:550px;" width="8" height="11" viewBox="0 0 8 11"><rect x="0.6" y="0.6" width="6.3" height="9.5" rx="2.6" fill="none" stroke="#aaa" stroke-width="0.9"/><rect x="3.8" y="1.3" width="2.4" height="3.8" fill="#aaa"/></svg>
<div class="t" style="left:102px;top:550.6px;font-size:7.0px;color:#a8a8a8;">Object</div>
<div class="t" style="right:7px;top:550.4px;font-size:7.0px;color:#9a9a9a;text-align:right;">4.3.0</div>
</body></html>
